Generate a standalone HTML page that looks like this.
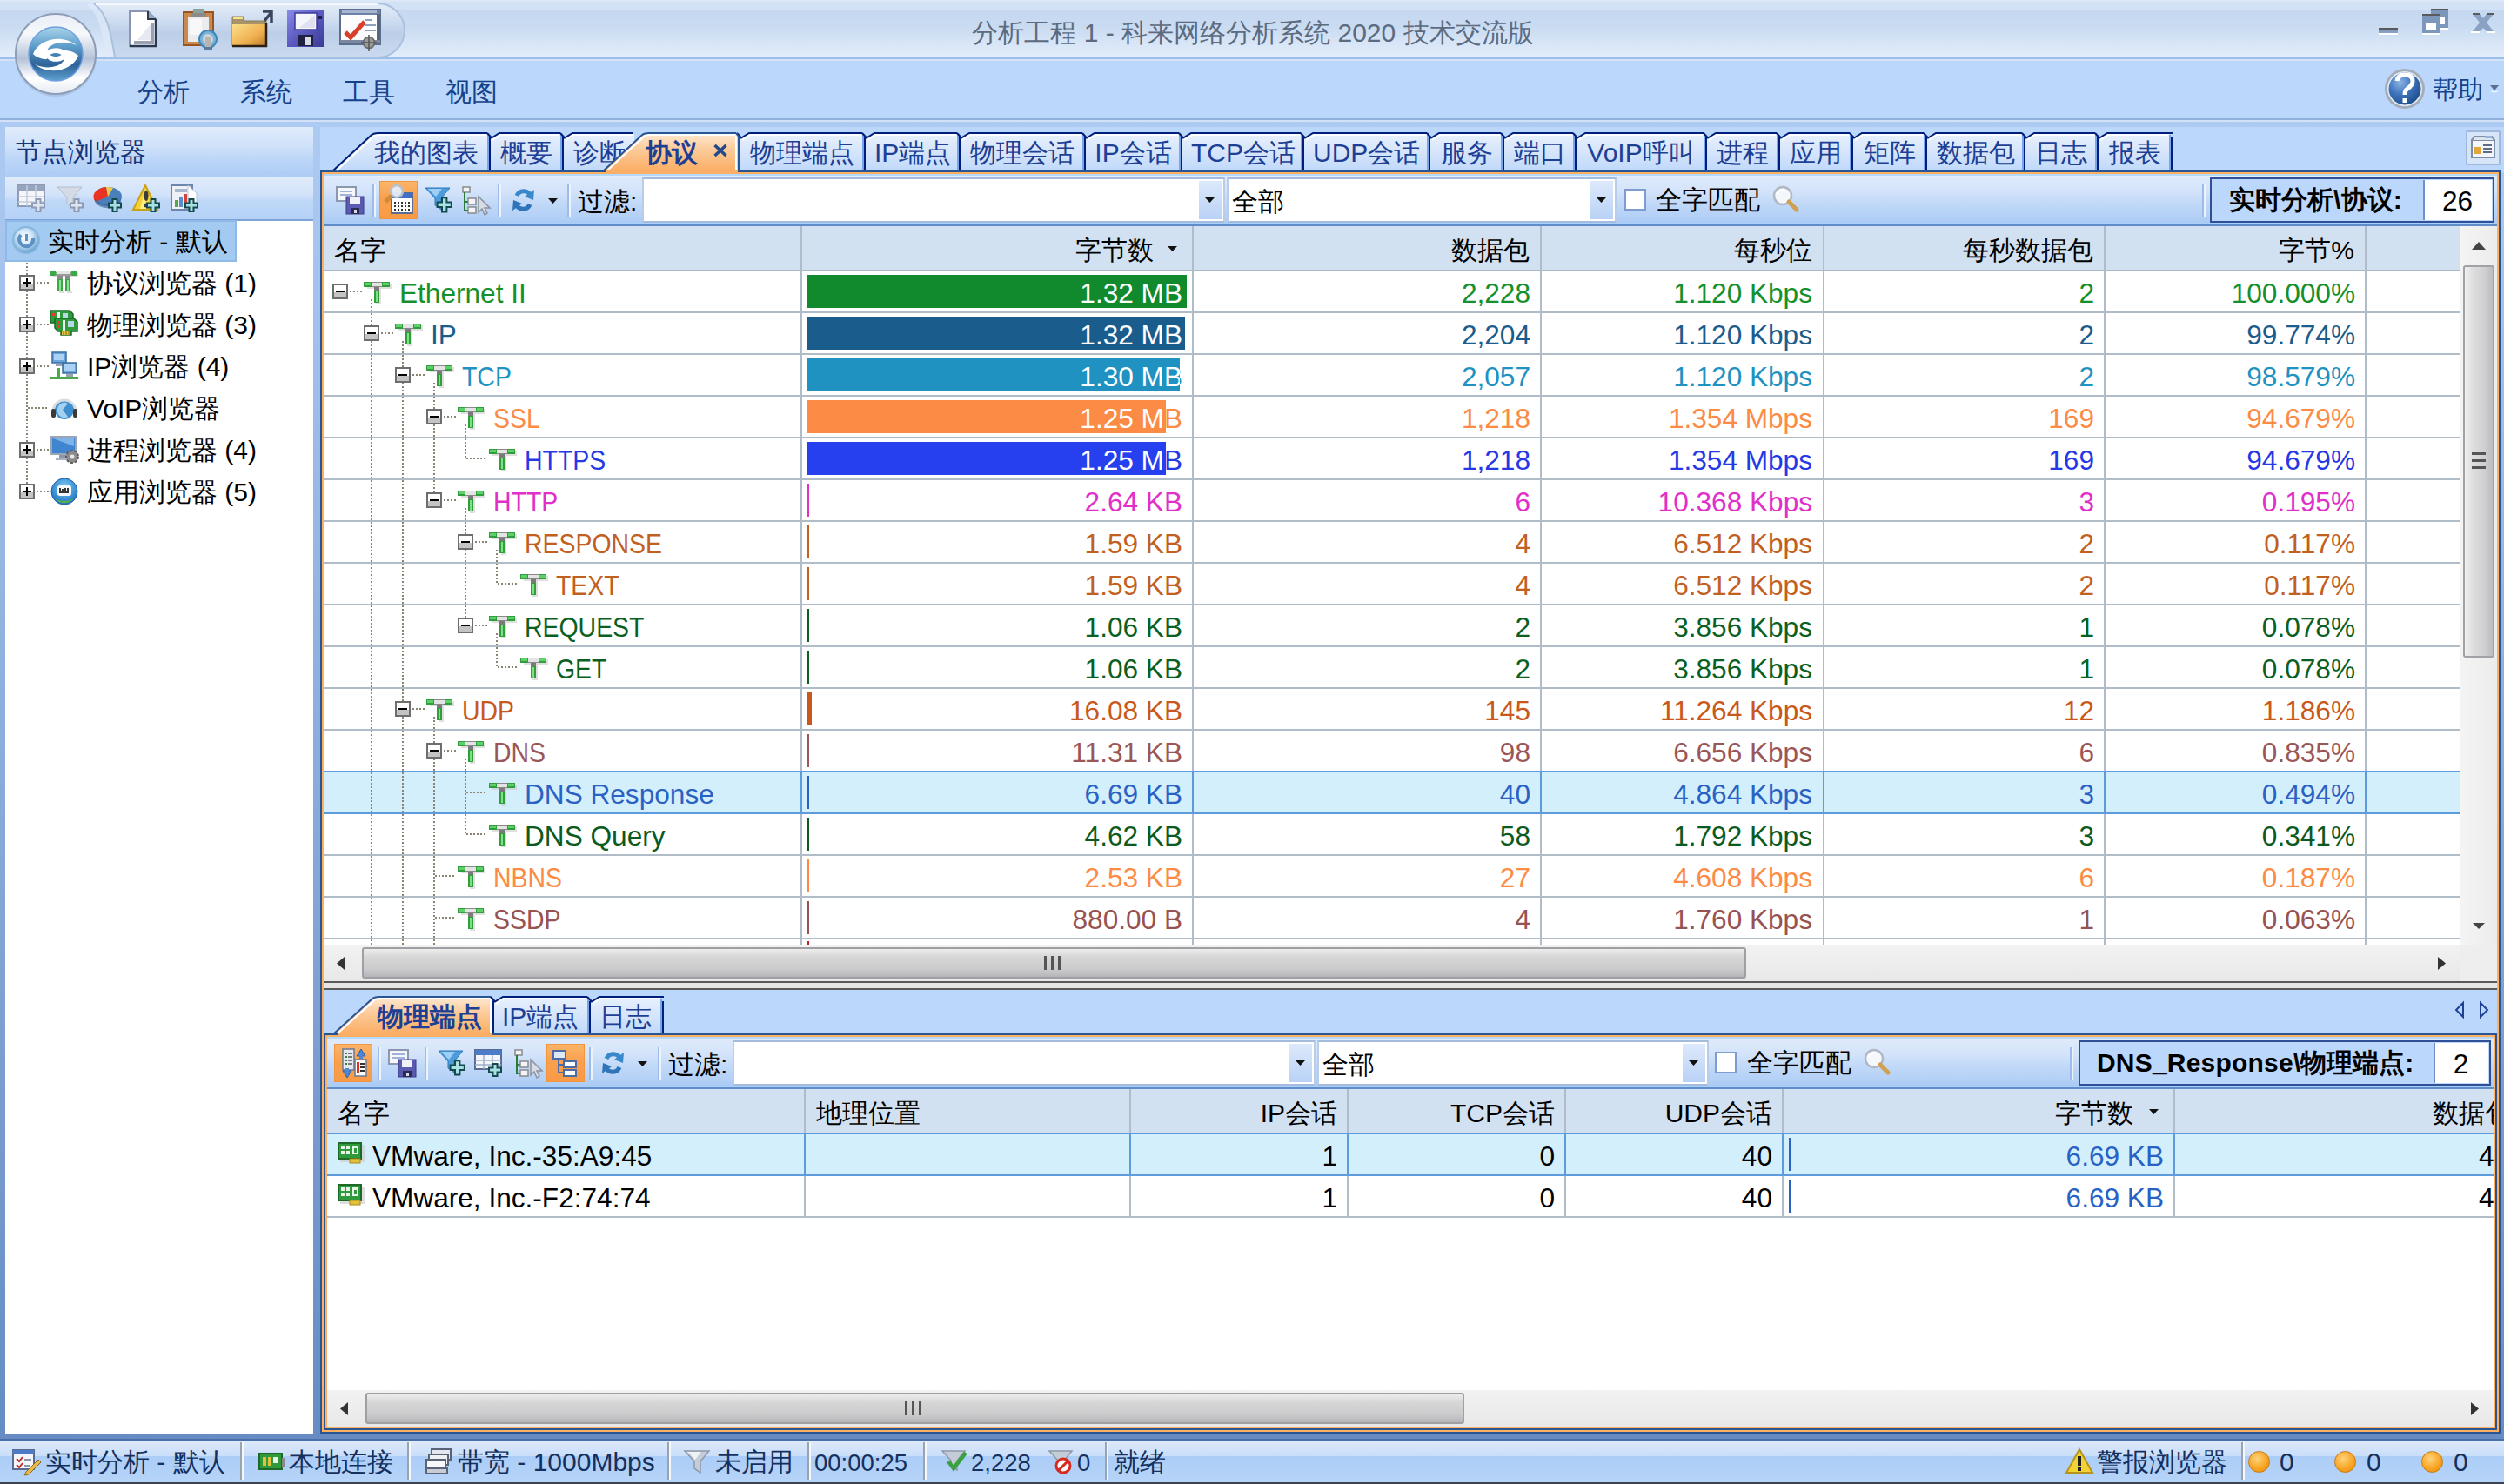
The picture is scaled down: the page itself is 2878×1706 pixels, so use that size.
<!DOCTYPE html>
<html lang="zh"><head><meta charset="utf-8"><title>科来网络分析系统</title><style>
html,body{margin:0;padding:0;}
body{width:2878px;height:1706px;overflow:hidden;background:#bbd7fb;font-family:"Liberation Sans",sans-serif;font-size:30px;color:#000;position:relative;}
div{position:absolute;box-sizing:border-box;}
.t{white-space:nowrap;overflow:visible;font-size:31.6px;}
.c{white-space:nowrap;overflow:visible;}
.k{display:inline-block;width:1em;text-align:center;}
.r{text-align:right;}
svg{position:absolute;overflow:visible;}
.hl{background:#b1bcc9;height:2px;}
.vl{background:#b1bcc9;width:2px;}
</style></head><body>
<div style="left:0px;top:0px;width:2878px;height:68px;background:linear-gradient(180deg,#dde8f6 0,#dde8f6 2px,#d3e1f4 2px,#d3e1f4 12px,#c5d8f0 12px,#c9dbf1 30px,#d6e4f6 48px,#e3eefb 66px,#9bbfea 66px,#9bbfea 68px);"></div>
<div style="left:0px;top:68px;width:2878px;height:68px;background:#bbd7fb;"></div>
<div style="left:0px;top:68px;width:2878px;height:2px;background:#d5e3f6;"></div>
<div style="left:0px;top:136px;width:2878px;height:2px;background:#91b1dc;"></div>
<div style="left:0px;top:138px;width:2878px;height:2px;background:#d2e1f5;"></div>
<div style="left:0px;top:140px;width:2878px;height:1516px;background:linear-gradient(180deg,#adcbf2 0,#668cc3 100%);"></div>
<svg style="left:100px;top:0px" width="380" height="70" viewBox="0 0 380 70"><defs><linearGradient id="qg" x1="0" y1="0" x2="0" y2="1"><stop offset="0" stop-color="#e4edf8"/><stop offset=".25" stop-color="#d3e0f2"/><stop offset=".5" stop-color="#c0d2ea"/><stop offset=".55" stop-color="#bccfe8"/><stop offset="1" stop-color="#cbdaef"/></linearGradient></defs><path d="M2 3 C 18 12, 22 40, 26 66" fill="none" stroke="#e0eaf8" stroke-width="8" opacity=".7"/><path d="M8 4 H334 A31 31 0 0 1 334 66 H32 C 28 40, 24 16, 8 4 Z" fill="url(#qg)" stroke="#a9c0de" stroke-width="2"/><path d="M10 5 H334" stroke="#f4f8fd" stroke-width="2"/></svg>
<div class="t" style="left:1090px;top:18px;width:700px;height:40px;line-height:40px;color:#5c6b80;font-size:30px;text-align:center;"><span class="k">分</span><span class="k">析</span><span class="k">工</span><span class="k">程</span> 1 - <span class="k">科</span><span class="k">来</span><span class="k">网</span><span class="k">络</span><span class="k">分</span><span class="k">析</span><span class="k">系</span><span class="k">统</span> 2020 <span class="k">技</span><span class="k">术</span><span class="k">交</span><span class="k">流</span><span class="k">版</span></div>
<div style="left:2734px;top:32px;width:22px;height:6px;background:linear-gradient(180deg,#5a5a5a 0,#5a5a5a 2px,#7d96bc 2px,#8ba3c6 100%);"></div>
<div style="left:2734px;top:38px;width:22px;height:2px;background:#fff;"></div>
<svg style="left:2784px;top:10px" width="32" height="32" viewBox="0 0 32 32"><rect x="10" y="0" width="20" height="22" fill="#7d96bc"/><rect x="10" y="0" width="20" height="2" fill="#5a5a5a"/><rect x="20" y="10" width="6" height="8" fill="#fff"/><rect x="10" y="22" width="20" height="2" fill="#fff"/><rect x="0" y="6" width="20" height="22" fill="#7d96bc"/><rect x="0" y="6" width="20" height="2" fill="#5a5a5a"/><rect x="4" y="16" width="12" height="8" fill="#fff"/><rect x="0" y="28" width="20" height="2" fill="#fff"/></svg>
<svg style="left:2839px;top:16px" width="30" height="24" viewBox="0 0 30 24"><path d="M3 20 H11 L15 16 L19 20 H27 L19 10 L27 0 H19 L15 5 L11 0 H3 L11 10 Z" fill="#8aa2c4"/><path d="M3 0 H11 M19 0 H27" stroke="#5a5a5a" stroke-width="2"/><path d="M1 21 H11 M19 21 H29" stroke="#fff" stroke-width="2"/></svg>
<svg style="left:14px;top:12px" width="100" height="100" viewBox="0 0 100 100"><defs><linearGradient id="og" x1="0" y1="0" x2="0" y2="1"><stop offset="0" stop-color="#e9eef6"/><stop offset=".25" stop-color="#f6f8fb"/><stop offset=".5" stop-color="#c2cde0"/><stop offset=".56" stop-color="#b4c2d8"/><stop offset=".8" stop-color="#ffffff"/><stop offset="1" stop-color="#e4eaf2"/></linearGradient><linearGradient id="ob" x1="0" y1="0" x2="0" y2="1"><stop offset="0" stop-color="#aad4ea"/><stop offset=".35" stop-color="#5f9fcc"/><stop offset=".7" stop-color="#2d6298"/><stop offset="1" stop-color="#5fa3cf"/></linearGradient></defs><circle cx="50" cy="52" r="47" fill="#8fa4c4" opacity=".35"/><circle cx="50" cy="50" r="46" fill="url(#og)" stroke="#8d9db6" stroke-width="2"/><circle cx="50" cy="50" r="31" fill="url(#ob)" stroke="#6fa0e0" stroke-width="1.5"/><path d="M24 50 C 30 34, 56 26, 74 40 C 62 34, 44 36, 40 46 C 50 40, 66 44, 60 54 C 54 46, 42 48, 40 56 C 34 56, 28 54, 24 50 Z" fill="#fff"/><path d="M76 52 C 70 68, 44 76, 26 62 C 38 68, 56 66, 60 56 C 50 62, 36 58, 40 48 C 46 56, 58 54, 60 46 C 66 46, 72 48, 76 52 Z" fill="#fff"/></svg>
<svg style="left:148px;top:12px" width="34" height="42" viewBox="0 0 34 42"><path d="M1 1 H22 L31 10 V41 H1 Z" fill="#fff" stroke="#8a96b4" stroke-width="2"/><path d="M22 1 V10 H31" fill="#9aa8bc" stroke="#2a3a50" stroke-width="2"/><path d="M31 10 V41 H1" stroke="#2a3a50" stroke-width="2.5" fill="none"/><path d="M6 37 H27 V14" stroke="#98a2b2" stroke-width="4" fill="none"/><path d="M10 34 L25 16 V34 Z" fill="#e6e8f2"/></svg>
<svg style="left:210px;top:10px" width="42" height="48" viewBox="0 0 42 48"><rect x="1" y="4" width="34" height="38" fill="#c98a50" stroke="#9a5420" stroke-width="2"/><rect x="6" y="10" width="24" height="28" fill="#ececee"/><rect x="8" y="12" width="14" height="18" fill="#f8f8f8"/><rect x="12" y="0" width="12" height="5" fill="#8aa09a"/><rect x="9" y="5" width="18" height="5" fill="#8a8a8a"/><circle cx="29" cy="35" r="10" fill="#7ab4d8" stroke="#3f87b8" stroke-width="2"/><circle cx="29" cy="35" r="6" fill="#cfd4da"/><rect x="26" y="32" width="6" height="12" fill="#b8b4b0"/><rect x="24" y="44" width="10" height="4" fill="#5a7a9a"/></svg>
<svg style="left:266px;top:12px" width="50" height="44" viewBox="0 0 50 44"><defs><linearGradient id="fg" x1="0" y1="0" x2="1" y2="1"><stop offset="0" stop-color="#fbe08a"/><stop offset=".6" stop-color="#f0b050"/><stop offset="1" stop-color="#b87828"/></linearGradient></defs><path d="M1 7 H14 V12 H40 V41 H1 Z" fill="#a89468" stroke="#8a7a58" stroke-width="1"/><rect x="2" y="7" width="11" height="3" fill="#f6e48a"/><path d="M1 16 H40 V41 H1 Z" fill="url(#fg)"/><path d="M40 14 V41 H1" stroke="#2a2018" stroke-width="2.5" fill="none"/><path d="M36 1 H46 V14 M46 2 L38 12" stroke="#3b4660" stroke-width="3.5" fill="none"/></svg>
<svg style="left:330px;top:12px" width="42" height="42" viewBox="0 0 42 42"><defs><linearGradient id="sg" x1="0" y1="0" x2="1" y2="1"><stop offset="0" stop-color="#8a8ae8"/><stop offset=".5" stop-color="#5a5ac0"/><stop offset="1" stop-color="#3a3a98"/></linearGradient></defs><rect x="0" y="0" width="42" height="42" fill="url(#sg)"/><rect x="9" y="3" width="25" height="19" fill="#f4f6fb" stroke="#3a3a98" stroke-width="1.5"/><path d="M14 20 L32 5 V20 Z" fill="#dfe2ee"/><rect x="12" y="28" width="18" height="13" fill="#202040"/><rect x="20" y="30" width="8" height="10" fill="#d8dce6"/><rect x="36" y="6" width="4" height="4" fill="#20204a"/></svg>
<svg style="left:390px;top:10px" width="50" height="48" viewBox="0 0 50 48"><rect x="1" y="1" width="46" height="40" fill="#fdfdff" stroke="#5b6f8c" stroke-width="2"/><rect x="1" y="1" width="46" height="6" fill="#6d80a8"/><rect x="3" y="2" width="40" height="3" fill="#a8b4d0"/><path d="M45 6 V40" stroke="#56667c" stroke-width="4"/><path d="M1 38 H47" stroke="#7a88a0" stroke-width="4"/><path d="M7 27 L13 33 L29 15" stroke="#d9402c" stroke-width="5" fill="none"/><path d="M30 13 H38 M30 19 H42 M30 25 H42" stroke="#8ea0c0" stroke-width="2"/><circle cx="34" cy="39" r="6.5" fill="#9a9a9a" stroke="#666" stroke-width="1.5"/><path d="M34 30 V49 M25 39 H43" stroke="#555" stroke-width="1.5"/></svg>
<div class="t" style="left:158px;top:86px;width:60px;height:40px;line-height:40px;color:#15428b;font-size:30px;text-align:center;"><span class="k">分</span><span class="k">析</span></div>
<div class="t" style="left:276px;top:86px;width:60px;height:40px;line-height:40px;color:#15428b;font-size:30px;text-align:center;"><span class="k">系</span><span class="k">统</span></div>
<div class="t" style="left:394px;top:86px;width:60px;height:40px;line-height:40px;color:#15428b;font-size:30px;text-align:center;"><span class="k">工</span><span class="k">具</span></div>
<div class="t" style="left:512px;top:86px;width:60px;height:40px;line-height:40px;color:#15428b;font-size:30px;text-align:center;"><span class="k">视</span><span class="k">图</span></div>
<svg style="left:2740px;top:78px" width="48" height="48" viewBox="0 0 48 48"><defs><radialGradient id="hg" cx="35%" cy="30%" r="75%"><stop offset="0" stop-color="#8db4e6"/><stop offset=".5" stop-color="#3f73bc"/><stop offset="1" stop-color="#1d4f8c"/></radialGradient></defs><circle cx="24" cy="24" r="23" fill="#a4aeba"/><circle cx="24" cy="24" r="20" fill="#e4ecf6"/><circle cx="24" cy="24" r="18.5" fill="url(#hg)"/><path d="M15 15 Q16 8 24 8 Q33 8 33 15 Q33 20 27 24 Q24 26 24 31" fill="none" stroke="#fff" stroke-width="5"/><rect x="21.5" y="35" width="5" height="5" fill="#fff"/></svg>
<div class="t" style="left:2796px;top:83px;width:62px;height:40px;line-height:40px;color:#15428b;font-size:30px;font-size:29px;"><span class="k">帮</span><span class="k">助</span></div>
<svg style="left:2862px;top:98px" width="12" height="8" viewBox="0 0 12 8"><path d="M0 0 H10 L5 6 Z" fill="#5a6e90"/><path d="M1 7 L5 8 L9 7" stroke="#fff" stroke-width="1" fill="none"/></svg>
<div style="left:6px;top:146px;width:354px;height:57px;background:linear-gradient(180deg,#e0ecfb 0,#cfe1f9 40%,#b9d4f7 70%,#adcdf5 100%);"></div>
<div class="t" style="left:18px;top:155px;width:160px;height:40px;line-height:40px;color:#15357a;font-size:30px;"><span class="k">节</span><span class="k">点</span><span class="k">浏</span><span class="k">览</span><span class="k">器</span></div>
<div style="left:6px;top:204px;width:354px;height:48px;background:linear-gradient(180deg,#e1ecfb 0,#cfe1f9 45%,#bfd8f7 55%,#b4d1f6 100%);"></div>
<div style="left:6px;top:252px;width:354px;height:2px;background:#7da2da;"></div>
<div style="left:6px;top:254px;width:354px;height:1394px;background:#fff;"></div>
<div style="left:6px;top:253px;width:266px;height:48px;background:#a3caf0;border:2px solid #8fb9e8;"></div>
<svg style="left:20px;top:212px" width="36" height="36" viewBox="0 0 36 36"><rect x="1" y="1" width="30" height="24" fill="#f4f6fa" stroke="#8e9bb4" stroke-width="2"/><rect x="1" y="1" width="30" height="7" fill="#97a4bd"/><path d="M11 1 V25 M21 1 V25 M1 14 H31 M1 20 H31" stroke="#c4ccd9" stroke-width="1.5"/><path d="M21.5 17 H26.5 V21.5 H31 V26.5 H26.5 V31 H21.5 V26.5 H17 V21.5 H21.5 Z" fill="#dfe4ee" stroke="#8e9bb4" stroke-width="2"/></svg>
<svg style="left:64px;top:212px" width="36" height="36" viewBox="0 0 36 36"><path d="M2 3 H30 L20 15 V27 L13 22 V15 Z" fill="#d5dbe6" stroke="#b4bccb" stroke-width="1"/><path d="M21.5 17 H26.5 V21.5 H31 V26.5 H26.5 V31 H21.5 V26.5 H17 V21.5 H21.5 Z" fill="#dfe4ee" stroke="#8e9bb4" stroke-width="2"/></svg>
<svg style="left:108px;top:212px" width="36" height="36" viewBox="0 0 36 36"><ellipse cx="16" cy="14" rx="16" ry="11" fill="#4a7fbb"/><path d="M16 14 L2 20 A16 11 0 0 1 14 3 Z" fill="#ea3323"/><path d="M16 14 L14 3 A16 11 0 0 1 22 4 Z" fill="#f6c945"/><path d="M1 16 A16 11 0 0 0 31 16 V20 A16 11 0 0 1 1 20 Z" fill="#2e5d95" opacity=".6"/><path d="M21.5 17 H26.5 V21.5 H31 V26.5 H26.5 V31 H21.5 V26.5 H17 V21.5 H21.5 Z" fill="#a9e0e4" stroke="#14494d" stroke-width="2"/></svg>
<svg style="left:152px;top:212px" width="36" height="36" viewBox="0 0 36 36"><path d="M15 1 L29 29 H1 Z" fill="#f3d236" stroke="#c9a21a" stroke-width="2"/><path d="M9 28 L15 5 L16 28 Z" fill="#fff6a8" opacity=".7"/><ellipse cx="16" cy="13" rx="2.5" ry="6" fill="#3b3b3b"/><circle cx="16" cy="24" r="2.5" fill="#3b3b3b"/><path d="M21.5 17 H26.5 V21.5 H31 V26.5 H26.5 V31 H21.5 V26.5 H17 V21.5 H21.5 Z" fill="#a9e0e4" stroke="#14494d" stroke-width="2"/></svg>
<svg style="left:196px;top:212px" width="36" height="36" viewBox="0 0 36 36"><rect x="1" y="1" width="24" height="28" fill="#eef2f7" stroke="#6d86ad" stroke-width="2"/><path d="M20 1 L30 10 V24 H20 Z" fill="#fff" stroke="#b8c4d6"/><rect x="5" y="5" width="14" height="4" fill="#a9b7cf"/><rect x="5" y="18" width="4" height="8" fill="#58a455"/><rect x="10" y="15" width="4" height="11" fill="#5b8fc9"/><rect x="15" y="11" width="4" height="15" fill="#d6403a"/><path d="M21.5 17 H26.5 V21.5 H31 V26.5 H26.5 V31 H21.5 V26.5 H17 V21.5 H21.5 Z" fill="#a9e0e4" stroke="#14494d" stroke-width="2"/></svg>
<svg style="left:14px;top:260px" width="34" height="34" viewBox="0 0 34 34"><defs><radialGradient id="rg" cx="45%" cy="40%" r="60%"><stop offset="0" stop-color="#ffffff"/><stop offset=".5" stop-color="#cfe6f6"/><stop offset="1" stop-color="#5f9ed0"/></radialGradient></defs><circle cx="16" cy="16" r="15" fill="url(#rg)" stroke="#86b5dc" stroke-width="2"/><path d="M10 10 A8 8 0 1 0 24 14" fill="none" stroke="#5c8fc2" stroke-width="4"/><rect x="15" y="9" width="3" height="8" fill="#5c8fc2"/></svg>
<div class="t" style="left:55px;top:256px;width:210px;height:44px;line-height:44px;font-size:30px;"><span class="k">实</span><span class="k">时</span><span class="k">分</span><span class="k">析</span> - <span class="k">默</span><span class="k">认</span></div>
<div style="left:30px;top:302px;width:2px;height:264px;background:repeating-linear-gradient(180deg,#8c8472 0 2px,transparent 2px 4px);"></div>
<svg style="left:22px;top:316px" width="18" height="18" viewBox="0 0 18 18"><rect x="1" y="1" width="16" height="16" fill="#fff" stroke="#6e6e6e" stroke-width="2"/><rect x="2" y="10" width="14" height="6" fill="#c4c4c4"/><rect x="4" y="8" width="10" height="2" fill="#000"/><rect x="8" y="4" width="2" height="10" fill="#000"/></svg>
<div style="left:42px;top:324px;width:14px;height:2px;background:repeating-linear-gradient(90deg,#8c8472 0 2px,transparent 2px 4px);"></div>
<div class="t" style="left:100px;top:302px;width:220px;height:48px;line-height:48px;font-size:30px;"><span class="k">协</span><span class="k">议</span><span class="k">浏</span><span class="k">览</span><span class="k">器</span> (1)</div>
<svg style="left:58px;top:309px" width="34" height="32" viewBox="0 0 34 32"><rect x="2" y="4" width="30" height="6" fill="#c8c8c8" opacity=".6"/><rect x="0" y="2" width="30" height="6" fill="#9a9a9a"/><rect x="6" y="3" width="18" height="3" fill="#e4e4e4"/><path d="M0 2 H5 L7 5 L5 8 H0 Z M30 2 H25 L23 5 L25 8 H30 Z" fill="#3aa845"/><rect x="8" y="8" width="6" height="4" fill="#8a8a8a"/><rect x="17" y="8" width="6" height="4" fill="#8a8a8a"/><rect x="8" y="12" width="6" height="14" fill="#3aa845"/><rect x="10" y="13" width="2" height="12" fill="#8fe096"/><rect x="17" y="12" width="6" height="14" fill="#3aa845"/><rect x="19" y="13" width="2" height="12" fill="#8fe096"/><rect x="10" y="26" width="6" height="2" fill="#c8c8c8" opacity=".6"/><rect x="19" y="26" width="6" height="2" fill="#c8c8c8" opacity=".6"/></svg>
<svg style="left:22px;top:364px" width="18" height="18" viewBox="0 0 18 18"><rect x="1" y="1" width="16" height="16" fill="#fff" stroke="#6e6e6e" stroke-width="2"/><rect x="2" y="10" width="14" height="6" fill="#c4c4c4"/><rect x="4" y="8" width="10" height="2" fill="#000"/><rect x="8" y="4" width="2" height="10" fill="#000"/></svg>
<div style="left:42px;top:372px;width:14px;height:2px;background:repeating-linear-gradient(90deg,#8c8472 0 2px,transparent 2px 4px);"></div>
<div class="t" style="left:100px;top:350px;width:220px;height:48px;line-height:48px;font-size:30px;"><span class="k">物</span><span class="k">理</span><span class="k">浏</span><span class="k">览</span><span class="k">器</span> (3)</div>
<svg style="left:58px;top:357px" width="34" height="32" viewBox="0 0 34 32"><path d="M0 0 H22 L26 4 V14 H0 Z" fill="#2f9a3c" stroke="#1b6a27" stroke-width="1.5"/><rect x="2" y="3" width="3" height="3" fill="#e63a2a"/><rect x="8" y="2" width="3" height="8" fill="#e8f4e8"/><rect x="14" y="3" width="6" height="5" fill="#b8d8e8"/><path d="M5 9 H27 L31 13 V24 H24 V28 H12 V24 H9 L5 20 Z" fill="#2f9a3c" stroke="#1b6a27" stroke-width="1.5"/><rect x="8" y="12" width="3" height="3" fill="#e63a2a"/><rect x="8" y="17" width="3" height="3" fill="#e63a2a"/><rect x="14" y="11" width="3" height="12" fill="#e8f4e8"/><rect x="20" y="12" width="7" height="7" fill="#b8d8e8"/><rect x="13" y="24" width="10" height="4" fill="#e2c23a"/><path d="M15 24 V28 M18 24 V28 M21 24 V28" stroke="#8a6a10" stroke-width="1"/></svg>
<svg style="left:22px;top:412px" width="18" height="18" viewBox="0 0 18 18"><rect x="1" y="1" width="16" height="16" fill="#fff" stroke="#6e6e6e" stroke-width="2"/><rect x="2" y="10" width="14" height="6" fill="#c4c4c4"/><rect x="4" y="8" width="10" height="2" fill="#000"/><rect x="8" y="4" width="2" height="10" fill="#000"/></svg>
<div style="left:42px;top:420px;width:14px;height:2px;background:repeating-linear-gradient(90deg,#8c8472 0 2px,transparent 2px 4px);"></div>
<div class="t" style="left:100px;top:398px;width:220px;height:48px;line-height:48px;font-size:30px;">IP<span class="k">浏</span><span class="k">览</span><span class="k">器</span> (4)</div>
<svg style="left:58px;top:405px" width="34" height="32" viewBox="0 0 34 32"><rect x="2" y="0" width="16" height="12" fill="#6aa6dd" stroke="#3c6ea4" stroke-width="1.5"/><rect x="4" y="2" width="12" height="7" fill="#a9d2f4"/><rect x="6" y="13" width="8" height="3" fill="#98a4b4"/><rect x="14" y="12" width="16" height="12" fill="#6aa6dd" stroke="#3c6ea4" stroke-width="1.5"/><rect x="16" y="14" width="12" height="7" fill="#a9d2f4"/><rect x="18" y="25" width="8" height="3" fill="#98a4b4"/><rect x="0" y="28" width="32" height="3" fill="#4aa84f"/><rect x="8" y="18" width="3" height="10" fill="#4aa84f"/></svg>
<div style="left:32px;top:468px;width:24px;height:2px;background:repeating-linear-gradient(90deg,#8c8472 0 2px,transparent 2px 4px);"></div>
<div class="t" style="left:100px;top:446px;width:220px;height:48px;line-height:48px;font-size:30px;">VoIP<span class="k">浏</span><span class="k">览</span><span class="k">器</span></div>
<svg style="left:58px;top:453px" width="34" height="32" viewBox="0 0 34 32"><circle cx="16" cy="18" r="11" fill="#3d8fd0"/><path d="M8 18 A8 8 0 0 1 20 11 L14 18 L20 26 A8 8 0 0 1 8 18" fill="#bfe1f8" opacity=".8"/><path d="M3 20 A13 13 0 0 1 29 20" fill="none" stroke="#d8dde4" stroke-width="3"/><rect x="1" y="17" width="5" height="10" rx="2" fill="#3a3a3a"/><rect x="26" y="17" width="5" height="10" rx="2" fill="#3a3a3a"/></svg>
<svg style="left:22px;top:508px" width="18" height="18" viewBox="0 0 18 18"><rect x="1" y="1" width="16" height="16" fill="#fff" stroke="#6e6e6e" stroke-width="2"/><rect x="2" y="10" width="14" height="6" fill="#c4c4c4"/><rect x="4" y="8" width="10" height="2" fill="#000"/><rect x="8" y="4" width="2" height="10" fill="#000"/></svg>
<div style="left:42px;top:516px;width:14px;height:2px;background:repeating-linear-gradient(90deg,#8c8472 0 2px,transparent 2px 4px);"></div>
<div class="t" style="left:100px;top:494px;width:220px;height:48px;line-height:48px;font-size:30px;"><span class="k">进</span><span class="k">程</span><span class="k">浏</span><span class="k">览</span><span class="k">器</span> (4)</div>
<svg style="left:58px;top:501px" width="34" height="32" viewBox="0 0 34 32"><rect x="1" y="1" width="28" height="20" fill="#3f85d0" stroke="#9aa6b6" stroke-width="2"/><path d="M3 3 H27 V12 Z" fill="#7cb4ea"/><rect x="10" y="22" width="10" height="3" fill="#8c98a8"/><rect x="6" y="25" width="18" height="3" fill="#a8b2c0"/><circle cx="25" cy="24" r="7" fill="#8c8c8c" stroke="#5e5e5e" stroke-width="2" stroke-dasharray="3 2"/><circle cx="25" cy="24" r="2.5" fill="#e8e8e8"/></svg>
<svg style="left:22px;top:556px" width="18" height="18" viewBox="0 0 18 18"><rect x="1" y="1" width="16" height="16" fill="#fff" stroke="#6e6e6e" stroke-width="2"/><rect x="2" y="10" width="14" height="6" fill="#c4c4c4"/><rect x="4" y="8" width="10" height="2" fill="#000"/><rect x="8" y="4" width="2" height="10" fill="#000"/></svg>
<div style="left:42px;top:564px;width:14px;height:2px;background:repeating-linear-gradient(90deg,#8c8472 0 2px,transparent 2px 4px);"></div>
<div class="t" style="left:100px;top:542px;width:220px;height:48px;line-height:48px;font-size:30px;"><span class="k">应</span><span class="k">用</span><span class="k">浏</span><span class="k">览</span><span class="k">器</span> (5)</div>
<svg style="left:58px;top:549px" width="34" height="32" viewBox="0 0 34 32"><defs><radialGradient id="ag" cx="50%" cy="35%" r="65%"><stop offset="0" stop-color="#7fd0f6"/><stop offset="1" stop-color="#1b6fc0"/></radialGradient></defs><circle cx="16" cy="16" r="15" fill="url(#ag)" stroke="#1f5fa6" stroke-width="1"/><path d="M5 24 A14 14 0 0 0 27 24 C 20 28, 12 28, 5 24 Z" fill="#58b04a"/><rect x="8" y="9" width="16" height="12" rx="3" fill="#f4f8fc"/><path d="M11 12 V17 H14 V13 M14 17 H17 V12 M17 17 H20 V12" stroke="#333" stroke-width="2" fill="none"/></svg>
<div style="left:368px;top:146px;width:2510px;height:52px;background:#bbd7fb;"></div>
<div style="left:368px;top:196px;width:2506px;height:1452px;background:#2a5594;"></div>
<div style="left:370px;top:198px;width:2502px;height:1448px;background:#fdb060;"></div>
<div style="left:372px;top:200px;width:2498px;height:1444px;background:#fff;"></div>
<svg width="0" height="0" style="left:0;top:0"><defs><linearGradient id="tg" x1="0" y1="0" x2="0" y2="1"><stop offset="0" stop-color="#e8f1fd"/><stop offset=".5" stop-color="#d6e5fb"/><stop offset="1" stop-color="#c0d9fa"/></linearGradient><linearGradient id="tga" x1="0" y1="0" x2="0" y2="1"><stop offset="0" stop-color="#fee9d3"/><stop offset=".45" stop-color="#fcca98"/><stop offset="1" stop-color="#fbae65"/></linearGradient></defs></svg>
<svg style="left:379px;top:152px" width="193" height="44" viewBox="0 0 193 44"><path d="M4 44 L47 4 Q50 1 56 1 H180 L182 3 V44 Z" fill="url(#tg)"/><path d="M8 44 L49 6 Q51 3 56 3 H180" fill="none" stroke="#fff" stroke-width="2"/><path d="M182 3 V44" stroke="#79a5ea" stroke-width="2"/><path d="M4 44 L47 4 Q50 1 56 1 H181" fill="none" stroke="#001e7c" stroke-width="2"/></svg>
<div class="t" style="left:430px;top:155px;width:120px;height:42px;line-height:42px;color:#1d3f94;font-size:30px;text-align:center;"><span class="k">我</span><span class="k">的</span><span class="k">图</span><span class="k">表</span></div>
<svg style="left:512px;top:152px" width="144" height="44" viewBox="0 0 144 44"><path d="M52 44 V8 L54 6 L62 1 H131 L133 3 V44 Z" fill="url(#tg)"/><path d="M54 9 L63 3 H131" fill="none" stroke="#fff" stroke-width="2"/><path d="M133 3 V44" stroke="#79a5ea" stroke-width="2"/><path d="M48 1 L53 6.5 L62 1 H132 M51 6 V44" fill="none" stroke="#001e7c" stroke-width="2"/></svg>
<div class="t" style="left:574px;top:155px;width:62px;height:42px;line-height:42px;color:#1d3f94;font-size:30px;text-align:center;"><span class="k">概</span><span class="k">要</span></div>
<svg style="left:596px;top:152px" width="144" height="44" viewBox="0 0 144 44"><path d="M52 44 V8 L54 6 L62 1 H131 L133 3 V44 Z" fill="url(#tg)"/><path d="M54 9 L63 3 H131" fill="none" stroke="#fff" stroke-width="2"/><path d="M48 1 L53 6.5 L62 1 H132 M51 6 V44" fill="none" stroke="#001e7c" stroke-width="2"/></svg>
<div class="t" style="left:658px;top:155px;width:62px;height:42px;line-height:42px;color:#1d3f94;font-size:30px;text-align:center;"><span class="k">诊</span><span class="k">断</span></div>
<svg style="left:799px;top:152px" width="204" height="44" viewBox="0 0 204 44"><path d="M52 44 V8 L54 6 L62 1 H191 L193 3 V44 Z" fill="url(#tg)"/><path d="M54 9 L63 3 H191" fill="none" stroke="#fff" stroke-width="2"/><path d="M193 3 V44" stroke="#79a5ea" stroke-width="2"/><path d="M48 1 L53 6.5 L62 1 H192 M51 6 V44" fill="none" stroke="#001e7c" stroke-width="2"/></svg>
<div class="t" style="left:861px;top:155px;width:122px;height:42px;line-height:42px;color:#1d3f94;font-size:30px;text-align:center;"><span class="k">物</span><span class="k">理</span><span class="k">端</span><span class="k">点</span></div>
<svg style="left:943px;top:152px" width="169" height="44" viewBox="0 0 169 44"><path d="M52 44 V8 L54 6 L62 1 H156 L158 3 V44 Z" fill="url(#tg)"/><path d="M54 9 L63 3 H156" fill="none" stroke="#fff" stroke-width="2"/><path d="M158 3 V44" stroke="#79a5ea" stroke-width="2"/><path d="M48 1 L53 6.5 L62 1 H157 M51 6 V44" fill="none" stroke="#001e7c" stroke-width="2"/></svg>
<div class="t" style="left:1005px;top:155px;width:87px;height:42px;line-height:42px;color:#1d3f94;font-size:30px;text-align:center;">IP<span class="k">端</span><span class="k">点</span></div>
<svg style="left:1052px;top:152px" width="204" height="44" viewBox="0 0 204 44"><path d="M52 44 V8 L54 6 L62 1 H191 L193 3 V44 Z" fill="url(#tg)"/><path d="M54 9 L63 3 H191" fill="none" stroke="#fff" stroke-width="2"/><path d="M193 3 V44" stroke="#79a5ea" stroke-width="2"/><path d="M48 1 L53 6.5 L62 1 H192 M51 6 V44" fill="none" stroke="#001e7c" stroke-width="2"/></svg>
<div class="t" style="left:1114px;top:155px;width:122px;height:42px;line-height:42px;color:#1d3f94;font-size:30px;text-align:center;"><span class="k">物</span><span class="k">理</span><span class="k">会</span><span class="k">话</span></div>
<svg style="left:1196px;top:152px" width="171" height="44" viewBox="0 0 171 44"><path d="M52 44 V8 L54 6 L62 1 H158 L160 3 V44 Z" fill="url(#tg)"/><path d="M54 9 L63 3 H158" fill="none" stroke="#fff" stroke-width="2"/><path d="M160 3 V44" stroke="#79a5ea" stroke-width="2"/><path d="M48 1 L53 6.5 L62 1 H159 M51 6 V44" fill="none" stroke="#001e7c" stroke-width="2"/></svg>
<div class="t" style="left:1258px;top:155px;width:89px;height:42px;line-height:42px;color:#1d3f94;font-size:30px;text-align:center;">IP<span class="k">会</span><span class="k">话</span></div>
<svg style="left:1307px;top:152px" width="200" height="44" viewBox="0 0 200 44"><path d="M52 44 V8 L54 6 L62 1 H187 L189 3 V44 Z" fill="url(#tg)"/><path d="M54 9 L63 3 H187" fill="none" stroke="#fff" stroke-width="2"/><path d="M189 3 V44" stroke="#79a5ea" stroke-width="2"/><path d="M48 1 L53 6.5 L62 1 H188 M51 6 V44" fill="none" stroke="#001e7c" stroke-width="2"/></svg>
<div class="t" style="left:1369px;top:155px;width:118px;height:42px;line-height:42px;color:#1d3f94;font-size:30px;text-align:center;">TCP<span class="k">会</span><span class="k">话</span></div>
<svg style="left:1447px;top:152px" width="205" height="44" viewBox="0 0 205 44"><path d="M52 44 V8 L54 6 L62 1 H192 L194 3 V44 Z" fill="url(#tg)"/><path d="M54 9 L63 3 H192" fill="none" stroke="#fff" stroke-width="2"/><path d="M194 3 V44" stroke="#79a5ea" stroke-width="2"/><path d="M48 1 L53 6.5 L62 1 H193 M51 6 V44" fill="none" stroke="#001e7c" stroke-width="2"/></svg>
<div class="t" style="left:1509px;top:155px;width:123px;height:42px;line-height:42px;color:#1d3f94;font-size:30px;text-align:center;">UDP<span class="k">会</span><span class="k">话</span></div>
<svg style="left:1592px;top:152px" width="145" height="44" viewBox="0 0 145 44"><path d="M52 44 V8 L54 6 L62 1 H132 L134 3 V44 Z" fill="url(#tg)"/><path d="M54 9 L63 3 H132" fill="none" stroke="#fff" stroke-width="2"/><path d="M134 3 V44" stroke="#79a5ea" stroke-width="2"/><path d="M48 1 L53 6.5 L62 1 H133 M51 6 V44" fill="none" stroke="#001e7c" stroke-width="2"/></svg>
<div class="t" style="left:1654px;top:155px;width:63px;height:42px;line-height:42px;color:#1d3f94;font-size:30px;text-align:center;"><span class="k">服</span><span class="k">务</span></div>
<svg style="left:1677px;top:152px" width="143" height="44" viewBox="0 0 143 44"><path d="M52 44 V8 L54 6 L62 1 H130 L132 3 V44 Z" fill="url(#tg)"/><path d="M54 9 L63 3 H130" fill="none" stroke="#fff" stroke-width="2"/><path d="M132 3 V44" stroke="#79a5ea" stroke-width="2"/><path d="M48 1 L53 6.5 L62 1 H131 M51 6 V44" fill="none" stroke="#001e7c" stroke-width="2"/></svg>
<div class="t" style="left:1739px;top:155px;width:61px;height:42px;line-height:42px;color:#1d3f94;font-size:30px;text-align:center;"><span class="k">端</span><span class="k">口</span></div>
<svg style="left:1760px;top:152px" width="210" height="44" viewBox="0 0 210 44"><path d="M52 44 V8 L54 6 L62 1 H197 L199 3 V44 Z" fill="url(#tg)"/><path d="M54 9 L63 3 H197" fill="none" stroke="#fff" stroke-width="2"/><path d="M199 3 V44" stroke="#79a5ea" stroke-width="2"/><path d="M48 1 L53 6.5 L62 1 H198 M51 6 V44" fill="none" stroke="#001e7c" stroke-width="2"/></svg>
<div class="t" style="left:1822px;top:155px;width:128px;height:42px;line-height:42px;color:#1d3f94;font-size:30px;text-align:center;">VoIP<span class="k">呼</span><span class="k">叫</span></div>
<svg style="left:1910px;top:152px" width="144" height="44" viewBox="0 0 144 44"><path d="M52 44 V8 L54 6 L62 1 H131 L133 3 V44 Z" fill="url(#tg)"/><path d="M54 9 L63 3 H131" fill="none" stroke="#fff" stroke-width="2"/><path d="M133 3 V44" stroke="#79a5ea" stroke-width="2"/><path d="M48 1 L53 6.5 L62 1 H132 M51 6 V44" fill="none" stroke="#001e7c" stroke-width="2"/></svg>
<div class="t" style="left:1972px;top:155px;width:62px;height:42px;line-height:42px;color:#1d3f94;font-size:30px;text-align:center;"><span class="k">进</span><span class="k">程</span></div>
<svg style="left:1994px;top:152px" width="144" height="44" viewBox="0 0 144 44"><path d="M52 44 V8 L54 6 L62 1 H131 L133 3 V44 Z" fill="url(#tg)"/><path d="M54 9 L63 3 H131" fill="none" stroke="#fff" stroke-width="2"/><path d="M133 3 V44" stroke="#79a5ea" stroke-width="2"/><path d="M48 1 L53 6.5 L62 1 H132 M51 6 V44" fill="none" stroke="#001e7c" stroke-width="2"/></svg>
<div class="t" style="left:2056px;top:155px;width:62px;height:42px;line-height:42px;color:#1d3f94;font-size:30px;text-align:center;"><span class="k">应</span><span class="k">用</span></div>
<svg style="left:2078px;top:152px" width="145" height="44" viewBox="0 0 145 44"><path d="M52 44 V8 L54 6 L62 1 H132 L134 3 V44 Z" fill="url(#tg)"/><path d="M54 9 L63 3 H132" fill="none" stroke="#fff" stroke-width="2"/><path d="M134 3 V44" stroke="#79a5ea" stroke-width="2"/><path d="M48 1 L53 6.5 L62 1 H133 M51 6 V44" fill="none" stroke="#001e7c" stroke-width="2"/></svg>
<div class="t" style="left:2140px;top:155px;width:63px;height:42px;line-height:42px;color:#1d3f94;font-size:30px;text-align:center;"><span class="k">矩</span><span class="k">阵</span></div>
<svg style="left:2163px;top:152px" width="173" height="44" viewBox="0 0 173 44"><path d="M52 44 V8 L54 6 L62 1 H160 L162 3 V44 Z" fill="url(#tg)"/><path d="M54 9 L63 3 H160" fill="none" stroke="#fff" stroke-width="2"/><path d="M162 3 V44" stroke="#79a5ea" stroke-width="2"/><path d="M48 1 L53 6.5 L62 1 H161 M51 6 V44" fill="none" stroke="#001e7c" stroke-width="2"/></svg>
<div class="t" style="left:2225px;top:155px;width:91px;height:42px;line-height:42px;color:#1d3f94;font-size:30px;text-align:center;"><span class="k">数</span><span class="k">据</span><span class="k">包</span></div>
<svg style="left:2276px;top:152px" width="144" height="44" viewBox="0 0 144 44"><path d="M52 44 V8 L54 6 L62 1 H131 L133 3 V44 Z" fill="url(#tg)"/><path d="M54 9 L63 3 H131" fill="none" stroke="#fff" stroke-width="2"/><path d="M133 3 V44" stroke="#79a5ea" stroke-width="2"/><path d="M48 1 L53 6.5 L62 1 H132 M51 6 V44" fill="none" stroke="#001e7c" stroke-width="2"/></svg>
<div class="t" style="left:2338px;top:155px;width:62px;height:42px;line-height:42px;color:#1d3f94;font-size:30px;text-align:center;"><span class="k">日</span><span class="k">志</span></div>
<svg style="left:2360px;top:152px" width="145" height="44" viewBox="0 0 145 44"><path d="M52 44 V8 L54 6 L62 1 H132 L134 3 V44 Z" fill="url(#tg)"/><path d="M54 9 L63 3 H132" fill="none" stroke="#fff" stroke-width="2"/><path d="M134 3 V44" stroke="#79a5ea" stroke-width="2"/><path d="M48 1 L53 6.5 L62 1 H133 M51 6 V44" fill="none" stroke="#001e7c" stroke-width="2"/></svg>
<div class="t" style="left:2422px;top:155px;width:63px;height:42px;line-height:42px;color:#1d3f94;font-size:30px;text-align:center;"><span class="k">报</span><span class="k">表</span></div>
<div style="left:2495px;top:158px;width:2px;height:38px;background:#001e7c;"></div>
<div style="left:2493px;top:152px;width:4px;height:2px;background:#001e7c;"></div>
<svg style="left:690px;top:152px" width="168" height="44" viewBox="0 0 168 44"><path d="M4 44 L47 4 Q50 1 56 1 H155 L157 3 V44 Z" fill="url(#tga)"/><path d="M8 44 L49 6 Q51 3 56 3 H155" fill="none" stroke="#fff" stroke-width="2"/><path d="M156 4 V44" stroke="#fff" stroke-width="2"/><path d="M4 44 L47 4 Q50 1 56 1 H156" fill="none" stroke="#2a5594" stroke-width="2"/><path d="M156 1 L159 5 V44" fill="none" stroke="#2a5594" stroke-width="2"/></svg>
<div style="left:696px;top:196px;width:152px;height:4px;background:#fbae65;"></div>
<div class="t" style="left:742px;top:155px;width:60px;height:42px;line-height:42px;color:#1d3f94;font-size:30px;font-weight:bold;text-align:center;"><span class="k">协</span><span class="k">议</span></div>
<svg style="left:820px;top:166px" width="16" height="14" viewBox="0 0 16 14"><path d="M1.5 1 L14.5 13 M14.5 1 L1.5 13" stroke="#24488c" stroke-width="3.5"/></svg>
<div style="left:2834px;top:150px;width:40px;height:40px;border:2px solid #9fb8dc;background:#d7e5f8;border-radius:2px;"></div>
<svg style="left:2840px;top:156px" width="30" height="28" viewBox="0 0 30 28"><rect x="1" y="5" width="26" height="20" fill="#f4f6fa" stroke="#7d8ea8" stroke-width="2"/><path d="M1 5 L4 1 H24 L27 5" fill="#dfe5ee" stroke="#7d8ea8" stroke-width="2"/><rect x="16" y="0" width="8" height="3" fill="#9ab4e0"/><rect x="4" y="13" width="8" height="8" fill="#e2a63a"/><path d="M14 11 H24 M14 15 H24 M14 19 H24" stroke="#5c6c88" stroke-width="2"/></svg>
<div style="left:372px;top:200px;width:2498px;height:58px;background:linear-gradient(180deg,#b5d9fc 0,#b5d9fc 2px,#e4effc 2px,#deeafb 4px,#d3e3fa 35%,#c3daf8 55%,#b3d0f6 85%,#a9c9f3 100%);"></div>
<div style="left:372px;top:256px;width:2498px;height:2px;background:#a9d0fc;"></div>
<div style="left:372px;top:258px;width:2498px;height:2px;background:#5f8dca;"></div>
<svg style="left:386px;top:214px" width="34" height="34" viewBox="0 0 34 34"><rect x="1" y="1" width="22" height="16" fill="#f5f7fb" stroke="#8c98b0" stroke-width="2"/><path d="M5 6 H19 M5 10 H19" stroke="#9fb3dc" stroke-width="2"/><rect x="12" y="12" width="20" height="20" fill="#5a5ab0" stroke="#3c3c88" stroke-width="1"/><rect x="16" y="13" width="12" height="8" fill="#eef0fa"/><rect x="17" y="25" width="10" height="7" fill="#2a2a58"/><rect x="21" y="27" width="3" height="4" fill="#d8dce6"/></svg>
<div style="left:428px;top:212px;width:2px;height:38px;background:#9dbcea;"></div>
<div style="left:430px;top:212px;width:2px;height:38px;background:#edf4fd;"></div>
<div style="left:436px;top:208px;width:44px;height:44px;background:linear-gradient(180deg,#fbb469 0,#f9a04e 45%,#f99a45 100%);border:1px solid #f3953d;"></div>
<svg style="left:441px;top:210px" width="36" height="38" viewBox="0 0 36 38"><rect x="9" y="12" width="24" height="23" fill="#fff" stroke="#5a6c92" stroke-width="2"/><rect x="9" y="12" width="24" height="6" fill="#3e6fc4"/><g fill="#333"><rect x="12" y="22" width="2" height="2"/><rect x="12" y="26" width="2" height="2"/><rect x="12" y="30" width="2" height="2"/><rect x="16" y="22" width="2" height="2"/><rect x="16" y="26" width="2" height="2"/><rect x="16" y="30" width="2" height="2"/><rect x="20" y="22" width="2" height="2"/><rect x="20" y="26" width="2" height="2"/><rect x="20" y="30" width="2" height="2"/><rect x="24" y="22" width="2" height="2"/><rect x="24" y="26" width="2" height="2"/><rect x="24" y="30" width="2" height="2"/><rect x="28" y="22" width="2" height="2"/><rect x="28" y="26" width="2" height="2"/><rect x="28" y="30" width="2" height="2"/></g><circle cx="15" cy="10" r="7" fill="#e6eef8" stroke="#b9c0cc" stroke-width="2.5" opacity=".95"/><path d="M9 15 L2 22" stroke="#d08a3a" stroke-width="5"/></svg>
<svg style="left:488px;top:214px" width="34" height="34" viewBox="0 0 34 34"><path d="M1 2 H29 L19 14 V27 L12 22 V14 Z" fill="#4c9ddc" stroke="#2f78b8" stroke-width="1"/><path d="M4 3 H20 L13 12 Z" fill="#9fd0f4"/><path d="M20 18 H26 V24 H32 V30 H26 V36 H20 V30 H14 V24 H20 Z" transform="translate(2,-3) scale(.9)" fill="#a9e0e4" stroke="#14494d" stroke-width="2.2"/></svg>
<svg style="left:530px;top:214px" width="34" height="34" viewBox="0 0 34 34"><rect x="2" y="1" width="8" height="6" fill="#f2f4f8" stroke="#8a8a8a" stroke-width="1.5"/><path d="M4 7 V28 H8 M4 18 H8" stroke="#2a7a3a" stroke-width="2" fill="none"/><rect x="8" y="14" width="9" height="7" fill="#f2f4f8" stroke="#8a8a8a" stroke-width="1.5"/><rect x="8" y="24" width="9" height="7" fill="#f2f4f8" stroke="#8a8a8a" stroke-width="1.5"/><path d="M20 12 V30 L24 26 L27 33 L30 31 L27 25 H33 Z" fill="#d8dce4" stroke="#8a92a0" stroke-width="1.5"/></svg>
<div style="left:572px;top:212px;width:2px;height:38px;background:#9dbcea;"></div>
<div style="left:574px;top:212px;width:2px;height:38px;background:#edf4fd;"></div>
<svg style="left:589px;top:215px" width="26" height="30" viewBox="0 0 26 30"><path d="M21 11 A8.5 8.5 0 0 0 5 10" fill="none" stroke="#3a88cc" stroke-width="5"/><path d="M25 3 L24 15 L14 11 Z" fill="#3a88cc"/><path d="M4 19 A8.5 8.5 0 0 0 20 20" fill="none" stroke="#2f74b8" stroke-width="5"/><path d="M0 27 L1 15 L11 19 Z" fill="#2f74b8"/></svg>
<svg style="left:630px;top:228px" width="12" height="8" viewBox="0 0 12 8"><path d="M0 0 H11 L5.5 6 Z" fill="#111"/></svg>
<div style="left:652px;top:212px;width:2px;height:38px;background:#9dbcea;"></div>
<div style="left:654px;top:212px;width:2px;height:38px;background:#edf4fd;"></div>
<div class="t" style="left:664px;top:210px;width:70px;height:44px;line-height:44px;font-size:30px;"><span class="k">过</span><span class="k">滤</span>:</div>
<div style="left:738px;top:204px;width:670px;height:52px;background:#fff;border:2px solid #a3bbdc;border-left-color:#b9cde9;border-right-color:#b9cde9;"></div>
<div style="left:1378px;top:208px;width:26px;height:44px;background:linear-gradient(180deg,#dde9fb,#b9d2f6);"></div>
<svg style="left:1385px;top:227px" width="12" height="8" viewBox="0 0 12 8"><path d="M0 0 H11 L5.5 6 Z" fill="#111"/></svg>
<div style="left:1410px;top:204px;width:448px;height:52px;background:#fff;border:2px solid #a3bbdc;border-left-color:#b9cde9;border-right-color:#b9cde9;"></div>
<div style="left:1828px;top:208px;width:26px;height:44px;background:linear-gradient(180deg,#dde9fb,#b9d2f6);"></div>
<svg style="left:1835px;top:227px" width="12" height="8" viewBox="0 0 12 8"><path d="M0 0 H11 L5.5 6 Z" fill="#111"/></svg>
<div class="t" style="left:1416px;top:206px;width:100px;height:52px;line-height:52px;font-size:30px;"><span class="k">全</span><span class="k">部</span></div>
<div style="left:1867px;top:217px;width:25px;height:25px;background:#fff;border:2px solid #7d9cd0;"></div>
<div class="t" style="left:1903px;top:208px;width:124px;height:44px;line-height:44px;font-size:30px;"><span class="k">全</span><span class="k">字</span><span class="k">匹</span><span class="k">配</span></div>
<svg style="left:2037px;top:213px" width="32" height="32" viewBox="0 0 32 32"><circle cx="12" cy="12" r="10" fill="#f4f8fc" stroke="#b0b8c4" stroke-width="2.5"/><path d="M6 10 A7 7 0 0 1 14 5" stroke="#fff" stroke-width="2" fill="none"/><path d="M19 19 L28 28" stroke="#d0a050" stroke-width="5" stroke-linecap="round"/></svg>
<div style="left:2531px;top:212px;width:2px;height:38px;background:#9dbcea;"></div>
<div style="left:2533px;top:212px;width:2px;height:38px;background:#edf4fd;"></div>
<div style="left:2540px;top:204px;width:327px;height:52px;background:#bbd7fb;border:2px solid #2f4f96;"></div>
<div style="left:2785px;top:207px;width:79px;height:46px;background:#fff;border-left:2px solid #6f8fc8;"></div>
<div class="t" style="left:2562px;top:208px;width:220px;height:44px;line-height:44px;font-weight:bold;font-size:30px;letter-spacing:0.5px;"><span class="k">实</span><span class="k">时</span><span class="k">分</span><span class="k">析</span>\<span class="k">协</span><span class="k">议</span>:</div>
<div class="t" style="left:2785px;top:208px;width:79px;height:46px;line-height:46px;text-align:center;">26</div>
<div style="left:372px;top:260px;width:2456px;height:50px;background:#d2e1f1;"></div>
<div style="left:372px;top:310px;width:2456px;height:2px;background:#a9b6c4;"></div>
<div style="left:920px;top:260px;width:2px;height:826px;background:#b1bcc9;"></div>
<div style="left:1370px;top:260px;width:2px;height:826px;background:#b1bcc9;"></div>
<div style="left:1770px;top:260px;width:2px;height:826px;background:#b1bcc9;"></div>
<div style="left:2095px;top:260px;width:2px;height:826px;background:#b1bcc9;"></div>
<div style="left:2418px;top:260px;width:2px;height:826px;background:#b1bcc9;"></div>
<div style="left:2718px;top:260px;width:2px;height:826px;background:#b1bcc9;"></div>
<div class="t" style="left:384px;top:264px;width:80px;height:48px;line-height:48px;font-size:30px;"><span class="k">名</span><span class="k">字</span></div>
<div class="t" style="left:926px;top:264px;width:400px;height:48px;line-height:48px;text-align:right;font-size:30px;"><span class="k">字</span><span class="k">节</span><span class="k">数</span></div>
<svg style="left:1342px;top:283px" width="12" height="8" viewBox="0 0 12 8"><path d="M0 0 H11 L5.5 6 Z" fill="#111"/></svg>
<div class="t" style="left:1358px;top:264px;width:400px;height:48px;line-height:48px;text-align:right;font-size:30px;"><span class="k">数</span><span class="k">据</span><span class="k">包</span></div>
<div class="t" style="left:1683px;top:264px;width:400px;height:48px;line-height:48px;text-align:right;font-size:30px;"><span class="k">每</span><span class="k">秒</span><span class="k">位</span></div>
<div class="t" style="left:2006px;top:264px;width:400px;height:48px;line-height:48px;text-align:right;font-size:30px;"><span class="k">每</span><span class="k">秒</span><span class="k">数</span><span class="k">据</span><span class="k">包</span></div>
<div class="t" style="left:2306px;top:264px;width:400px;height:48px;line-height:48px;text-align:right;font-size:30px;"><span class="k">字</span><span class="k">节</span>%</div>
<div style="left:372px;top:358px;width:2456px;height:2px;background:#b1bcc9;"></div>
<div style="left:372px;top:406px;width:2456px;height:2px;background:#b1bcc9;"></div>
<div style="left:372px;top:454px;width:2456px;height:2px;background:#b1bcc9;"></div>
<div style="left:372px;top:502px;width:2456px;height:2px;background:#b1bcc9;"></div>
<div style="left:372px;top:550px;width:2456px;height:2px;background:#b1bcc9;"></div>
<div style="left:372px;top:598px;width:2456px;height:2px;background:#b1bcc9;"></div>
<div style="left:372px;top:646px;width:2456px;height:2px;background:#b1bcc9;"></div>
<div style="left:372px;top:694px;width:2456px;height:2px;background:#b1bcc9;"></div>
<div style="left:372px;top:742px;width:2456px;height:2px;background:#b1bcc9;"></div>
<div style="left:372px;top:790px;width:2456px;height:2px;background:#b1bcc9;"></div>
<div style="left:372px;top:838px;width:2456px;height:2px;background:#b1bcc9;"></div>
<div style="left:372px;top:886px;width:2456px;height:2px;background:#b1bcc9;"></div>
<div style="left:372px;top:886px;width:2456px;height:50px;background:#d4effc;border-top:2px solid #5d9bdc;border-bottom:2px solid #5d9bdc;"></div>
<div style="left:920px;top:888px;width:2px;height:46px;background:#5d9bdc;"></div>
<div style="left:1370px;top:888px;width:2px;height:46px;background:#5d9bdc;"></div>
<div style="left:1770px;top:888px;width:2px;height:46px;background:#5d9bdc;"></div>
<div style="left:2095px;top:888px;width:2px;height:46px;background:#5d9bdc;"></div>
<div style="left:2418px;top:888px;width:2px;height:46px;background:#5d9bdc;"></div>
<div style="left:2718px;top:888px;width:2px;height:46px;background:#5d9bdc;"></div>
<div style="left:372px;top:982px;width:2456px;height:2px;background:#b1bcc9;"></div>
<div style="left:372px;top:1030px;width:2456px;height:2px;background:#b1bcc9;"></div>
<div style="left:372px;top:1078px;width:2456px;height:2px;background:#b1bcc9;"></div>
<div style="left:426px;top:344px;width:2px;height:742px;background:repeating-linear-gradient(180deg,#8c8472 0 2px,transparent 2px 4px);"></div>
<div style="left:462px;top:392px;width:2px;height:694px;background:repeating-linear-gradient(180deg,#8c8472 0 2px,transparent 2px 4px);"></div>
<div style="left:498px;top:440px;width:2px;height:135px;background:repeating-linear-gradient(180deg,#8c8472 0 2px,transparent 2px 4px);"></div>
<div style="left:534px;top:488px;width:2px;height:39px;background:repeating-linear-gradient(180deg,#8c8472 0 2px,transparent 2px 4px);"></div>
<div style="left:534px;top:584px;width:2px;height:135px;background:repeating-linear-gradient(180deg,#8c8472 0 2px,transparent 2px 4px);"></div>
<div style="left:570px;top:632px;width:2px;height:39px;background:repeating-linear-gradient(180deg,#8c8472 0 2px,transparent 2px 4px);"></div>
<div style="left:570px;top:728px;width:2px;height:39px;background:repeating-linear-gradient(180deg,#8c8472 0 2px,transparent 2px 4px);"></div>
<div style="left:498px;top:824px;width:2px;height:262px;background:repeating-linear-gradient(180deg,#8c8472 0 2px,transparent 2px 4px);"></div>
<div style="left:534px;top:872px;width:2px;height:87px;background:repeating-linear-gradient(180deg,#8c8472 0 2px,transparent 2px 4px);"></div>
<svg style="left:382px;top:326px" width="18" height="18" viewBox="0 0 18 18"><rect x="1" y="1" width="16" height="16" fill="#fff" stroke="#6e6e6e" stroke-width="2"/><rect x="2" y="10" width="14" height="6" fill="#c4c4c4"/><rect x="4" y="8" width="10" height="2" fill="#000"/></svg>
<div style="left:402px;top:334px;width:14px;height:2px;background:repeating-linear-gradient(90deg,#8c8472 0 2px,transparent 2px 4px);"></div>
<svg style="left:418px;top:324px" width="34" height="28" viewBox="0 0 34 28"><g><rect x="4" y="2" width="28" height="6" fill="#c9c9c9" opacity=".6"/><rect x="14" y="8" width="6" height="18" fill="#c9c9c9" opacity=".6"/><rect x="0" y="0" width="30" height="6" fill="#8a8a8a"/><rect x="9" y="1" width="12" height="4" fill="#e4e4e4"/><rect x="0" y="0" width="9" height="6" fill="#2f9e3b"/><rect x="1" y="1" width="7" height="3" fill="#5fcf69"/><rect x="21" y="0" width="9" height="6" fill="#2f9e3b"/><rect x="22" y="1" width="7" height="3" fill="#5fcf69"/><rect x="12" y="6" width="6" height="4" fill="#7a7a7a"/><rect x="12" y="10" width="6" height="14" fill="#2f9e3b"/><rect x="14" y="11" width="2" height="12" fill="#7fe088"/></g></svg>
<div class="t" style="left:459px;top:314px;width:300px;height:46px;line-height:46px;color:#14902c;">Ethernet II</div>
<div style="left:928px;top:316px;width:436px;height:38px;background:#108a2c;"></div>
<div class="t" style="left:959px;top:314px;width:400px;height:46px;line-height:46px;text-align:right;color:#14902c;">1.32 MB</div>
<div style="left:928px;top:316px;width:436px;height:38px;overflow:hidden;"><div class="t" style="left:31px;top:-2px;width:400px;height:46px;line-height:46px;text-align:right;color:#fff;">1.32 MB</div></div>
<div class="t" style="left:1359px;top:314px;width:400px;height:46px;line-height:46px;text-align:right;color:#14902c;">2,228</div>
<div class="t" style="left:1683px;top:314px;width:400px;height:46px;line-height:46px;text-align:right;color:#14902c;">1.120 Kbps</div>
<div class="t" style="left:2007px;top:314px;width:400px;height:46px;line-height:46px;text-align:right;color:#14902c;">2</div>
<div class="t" style="left:2307px;top:314px;width:400px;height:46px;line-height:46px;text-align:right;color:#14902c;">100.000%</div>
<svg style="left:418px;top:374px" width="18" height="18" viewBox="0 0 18 18"><rect x="1" y="1" width="16" height="16" fill="#fff" stroke="#6e6e6e" stroke-width="2"/><rect x="2" y="10" width="14" height="6" fill="#c4c4c4"/><rect x="4" y="8" width="10" height="2" fill="#000"/></svg>
<div style="left:438px;top:382px;width:14px;height:2px;background:repeating-linear-gradient(90deg,#8c8472 0 2px,transparent 2px 4px);"></div>
<svg style="left:454px;top:372px" width="34" height="28" viewBox="0 0 34 28"><g><rect x="4" y="2" width="28" height="6" fill="#c9c9c9" opacity=".6"/><rect x="14" y="8" width="6" height="18" fill="#c9c9c9" opacity=".6"/><rect x="0" y="0" width="30" height="6" fill="#8a8a8a"/><rect x="9" y="1" width="12" height="4" fill="#e4e4e4"/><rect x="0" y="0" width="9" height="6" fill="#2f9e3b"/><rect x="1" y="1" width="7" height="3" fill="#5fcf69"/><rect x="21" y="0" width="9" height="6" fill="#2f9e3b"/><rect x="22" y="1" width="7" height="3" fill="#5fcf69"/><rect x="12" y="6" width="6" height="4" fill="#7a7a7a"/><rect x="12" y="10" width="6" height="14" fill="#2f9e3b"/><rect x="14" y="11" width="2" height="12" fill="#7fe088"/></g></svg>
<div class="t" style="left:495px;top:362px;width:300px;height:46px;line-height:46px;color:#1a5c8c;">IP</div>
<div style="left:928px;top:364px;width:434px;height:38px;background:#1a5c8c;"></div>
<div class="t" style="left:959px;top:362px;width:400px;height:46px;line-height:46px;text-align:right;color:#1a5c8c;">1.32 MB</div>
<div style="left:928px;top:364px;width:434px;height:38px;overflow:hidden;"><div class="t" style="left:31px;top:-2px;width:400px;height:46px;line-height:46px;text-align:right;color:#fff;">1.32 MB</div></div>
<div class="t" style="left:1359px;top:362px;width:400px;height:46px;line-height:46px;text-align:right;color:#1a5c8c;">2,204</div>
<div class="t" style="left:1683px;top:362px;width:400px;height:46px;line-height:46px;text-align:right;color:#1a5c8c;">1.120 Kbps</div>
<div class="t" style="left:2007px;top:362px;width:400px;height:46px;line-height:46px;text-align:right;color:#1a5c8c;">2</div>
<div class="t" style="left:2307px;top:362px;width:400px;height:46px;line-height:46px;text-align:right;color:#1a5c8c;">99.774%</div>
<svg style="left:454px;top:422px" width="18" height="18" viewBox="0 0 18 18"><rect x="1" y="1" width="16" height="16" fill="#fff" stroke="#6e6e6e" stroke-width="2"/><rect x="2" y="10" width="14" height="6" fill="#c4c4c4"/><rect x="4" y="8" width="10" height="2" fill="#000"/></svg>
<div style="left:474px;top:430px;width:14px;height:2px;background:repeating-linear-gradient(90deg,#8c8472 0 2px,transparent 2px 4px);"></div>
<svg style="left:490px;top:420px" width="34" height="28" viewBox="0 0 34 28"><g><rect x="4" y="2" width="28" height="6" fill="#c9c9c9" opacity=".6"/><rect x="14" y="8" width="6" height="18" fill="#c9c9c9" opacity=".6"/><rect x="0" y="0" width="30" height="6" fill="#8a8a8a"/><rect x="9" y="1" width="12" height="4" fill="#e4e4e4"/><rect x="0" y="0" width="9" height="6" fill="#2f9e3b"/><rect x="1" y="1" width="7" height="3" fill="#5fcf69"/><rect x="21" y="0" width="9" height="6" fill="#2f9e3b"/><rect x="22" y="1" width="7" height="3" fill="#5fcf69"/><rect x="12" y="6" width="6" height="4" fill="#7a7a7a"/><rect x="12" y="10" width="6" height="14" fill="#2f9e3b"/><rect x="14" y="11" width="2" height="12" fill="#7fe088"/></g></svg>
<div class="t" style="left:531px;top:410px;width:300px;height:46px;line-height:46px;color:#2092c2;transform:scaleX(0.9);transform-origin:0 50%;">TCP</div>
<div style="left:928px;top:412px;width:428px;height:38px;background:#2092c2;"></div>
<div class="t" style="left:959px;top:410px;width:400px;height:46px;line-height:46px;text-align:right;color:#2092c2;">1.30 MB</div>
<div style="left:928px;top:412px;width:428px;height:38px;overflow:hidden;"><div class="t" style="left:31px;top:-2px;width:400px;height:46px;line-height:46px;text-align:right;color:#fff;">1.30 MB</div></div>
<div class="t" style="left:1359px;top:410px;width:400px;height:46px;line-height:46px;text-align:right;color:#2092c2;">2,057</div>
<div class="t" style="left:1683px;top:410px;width:400px;height:46px;line-height:46px;text-align:right;color:#2092c2;">1.120 Kbps</div>
<div class="t" style="left:2007px;top:410px;width:400px;height:46px;line-height:46px;text-align:right;color:#2092c2;">2</div>
<div class="t" style="left:2307px;top:410px;width:400px;height:46px;line-height:46px;text-align:right;color:#2092c2;">98.579%</div>
<svg style="left:490px;top:470px" width="18" height="18" viewBox="0 0 18 18"><rect x="1" y="1" width="16" height="16" fill="#fff" stroke="#6e6e6e" stroke-width="2"/><rect x="2" y="10" width="14" height="6" fill="#c4c4c4"/><rect x="4" y="8" width="10" height="2" fill="#000"/></svg>
<div style="left:510px;top:478px;width:14px;height:2px;background:repeating-linear-gradient(90deg,#8c8472 0 2px,transparent 2px 4px);"></div>
<svg style="left:526px;top:468px" width="34" height="28" viewBox="0 0 34 28"><g><rect x="4" y="2" width="28" height="6" fill="#c9c9c9" opacity=".6"/><rect x="14" y="8" width="6" height="18" fill="#c9c9c9" opacity=".6"/><rect x="0" y="0" width="30" height="6" fill="#8a8a8a"/><rect x="9" y="1" width="12" height="4" fill="#e4e4e4"/><rect x="0" y="0" width="9" height="6" fill="#2f9e3b"/><rect x="1" y="1" width="7" height="3" fill="#5fcf69"/><rect x="21" y="0" width="9" height="6" fill="#2f9e3b"/><rect x="22" y="1" width="7" height="3" fill="#5fcf69"/><rect x="12" y="6" width="6" height="4" fill="#7a7a7a"/><rect x="12" y="10" width="6" height="14" fill="#2f9e3b"/><rect x="14" y="11" width="2" height="12" fill="#7fe088"/></g></svg>
<div class="t" style="left:567px;top:458px;width:300px;height:46px;line-height:46px;color:#fb8b45;transform:scaleX(0.9);transform-origin:0 50%;">SSL</div>
<div style="left:928px;top:460px;width:412px;height:38px;background:#fb8b45;"></div>
<div class="t" style="left:959px;top:458px;width:400px;height:46px;line-height:46px;text-align:right;color:#fb8b45;">1.25 MB</div>
<div style="left:928px;top:460px;width:412px;height:38px;overflow:hidden;"><div class="t" style="left:31px;top:-2px;width:400px;height:46px;line-height:46px;text-align:right;color:#fff;">1.25 MB</div></div>
<div class="t" style="left:1359px;top:458px;width:400px;height:46px;line-height:46px;text-align:right;color:#fb8b45;">1,218</div>
<div class="t" style="left:1683px;top:458px;width:400px;height:46px;line-height:46px;text-align:right;color:#fb8b45;">1.354 Mbps</div>
<div class="t" style="left:2007px;top:458px;width:400px;height:46px;line-height:46px;text-align:right;color:#fb8b45;">169</div>
<div class="t" style="left:2307px;top:458px;width:400px;height:46px;line-height:46px;text-align:right;color:#fb8b45;">94.679%</div>
<div style="left:536px;top:526px;width:24px;height:2px;background:repeating-linear-gradient(90deg,#8c8472 0 2px,transparent 2px 4px);"></div>
<svg style="left:562px;top:516px" width="34" height="28" viewBox="0 0 34 28"><g><rect x="4" y="2" width="28" height="6" fill="#c9c9c9" opacity=".6"/><rect x="14" y="8" width="6" height="18" fill="#c9c9c9" opacity=".6"/><rect x="0" y="0" width="30" height="6" fill="#8a8a8a"/><rect x="9" y="1" width="12" height="4" fill="#e4e4e4"/><rect x="0" y="0" width="9" height="6" fill="#2f9e3b"/><rect x="1" y="1" width="7" height="3" fill="#5fcf69"/><rect x="21" y="0" width="9" height="6" fill="#2f9e3b"/><rect x="22" y="1" width="7" height="3" fill="#5fcf69"/><rect x="12" y="6" width="6" height="4" fill="#7a7a7a"/><rect x="12" y="10" width="6" height="14" fill="#2f9e3b"/><rect x="14" y="11" width="2" height="12" fill="#7fe088"/></g></svg>
<div class="t" style="left:603px;top:506px;width:300px;height:46px;line-height:46px;color:#2638e6;transform:scaleX(0.9);transform-origin:0 50%;">HTTPS</div>
<div style="left:928px;top:508px;width:412px;height:38px;background:#2640f0;"></div>
<div class="t" style="left:959px;top:506px;width:400px;height:46px;line-height:46px;text-align:right;color:#2638e6;">1.25 MB</div>
<div style="left:928px;top:508px;width:412px;height:38px;overflow:hidden;"><div class="t" style="left:31px;top:-2px;width:400px;height:46px;line-height:46px;text-align:right;color:#fff;">1.25 MB</div></div>
<div class="t" style="left:1359px;top:506px;width:400px;height:46px;line-height:46px;text-align:right;color:#2638e6;">1,218</div>
<div class="t" style="left:1683px;top:506px;width:400px;height:46px;line-height:46px;text-align:right;color:#2638e6;">1.354 Mbps</div>
<div class="t" style="left:2007px;top:506px;width:400px;height:46px;line-height:46px;text-align:right;color:#2638e6;">169</div>
<div class="t" style="left:2307px;top:506px;width:400px;height:46px;line-height:46px;text-align:right;color:#2638e6;">94.679%</div>
<svg style="left:490px;top:566px" width="18" height="18" viewBox="0 0 18 18"><rect x="1" y="1" width="16" height="16" fill="#fff" stroke="#6e6e6e" stroke-width="2"/><rect x="2" y="10" width="14" height="6" fill="#c4c4c4"/><rect x="4" y="8" width="10" height="2" fill="#000"/></svg>
<div style="left:510px;top:574px;width:14px;height:2px;background:repeating-linear-gradient(90deg,#8c8472 0 2px,transparent 2px 4px);"></div>
<svg style="left:526px;top:564px" width="34" height="28" viewBox="0 0 34 28"><g><rect x="4" y="2" width="28" height="6" fill="#c9c9c9" opacity=".6"/><rect x="14" y="8" width="6" height="18" fill="#c9c9c9" opacity=".6"/><rect x="0" y="0" width="30" height="6" fill="#8a8a8a"/><rect x="9" y="1" width="12" height="4" fill="#e4e4e4"/><rect x="0" y="0" width="9" height="6" fill="#2f9e3b"/><rect x="1" y="1" width="7" height="3" fill="#5fcf69"/><rect x="21" y="0" width="9" height="6" fill="#2f9e3b"/><rect x="22" y="1" width="7" height="3" fill="#5fcf69"/><rect x="12" y="6" width="6" height="4" fill="#7a7a7a"/><rect x="12" y="10" width="6" height="14" fill="#2f9e3b"/><rect x="14" y="11" width="2" height="12" fill="#7fe088"/></g></svg>
<div class="t" style="left:567px;top:554px;width:300px;height:46px;line-height:46px;color:#e12fc9;transform:scaleX(0.9);transform-origin:0 50%;">HTTP</div>
<div style="left:928px;top:556px;width:2px;height:38px;background:#e12fc9;"></div>
<div class="t" style="left:959px;top:554px;width:400px;height:46px;line-height:46px;text-align:right;color:#e12fc9;">2.64 KB</div>
<div class="t" style="left:1359px;top:554px;width:400px;height:46px;line-height:46px;text-align:right;color:#e12fc9;">6</div>
<div class="t" style="left:1683px;top:554px;width:400px;height:46px;line-height:46px;text-align:right;color:#e12fc9;">10.368 Kbps</div>
<div class="t" style="left:2007px;top:554px;width:400px;height:46px;line-height:46px;text-align:right;color:#e12fc9;">3</div>
<div class="t" style="left:2307px;top:554px;width:400px;height:46px;line-height:46px;text-align:right;color:#e12fc9;">0.195%</div>
<svg style="left:526px;top:614px" width="18" height="18" viewBox="0 0 18 18"><rect x="1" y="1" width="16" height="16" fill="#fff" stroke="#6e6e6e" stroke-width="2"/><rect x="2" y="10" width="14" height="6" fill="#c4c4c4"/><rect x="4" y="8" width="10" height="2" fill="#000"/></svg>
<div style="left:546px;top:622px;width:14px;height:2px;background:repeating-linear-gradient(90deg,#8c8472 0 2px,transparent 2px 4px);"></div>
<svg style="left:562px;top:612px" width="34" height="28" viewBox="0 0 34 28"><g><rect x="4" y="2" width="28" height="6" fill="#c9c9c9" opacity=".6"/><rect x="14" y="8" width="6" height="18" fill="#c9c9c9" opacity=".6"/><rect x="0" y="0" width="30" height="6" fill="#8a8a8a"/><rect x="9" y="1" width="12" height="4" fill="#e4e4e4"/><rect x="0" y="0" width="9" height="6" fill="#2f9e3b"/><rect x="1" y="1" width="7" height="3" fill="#5fcf69"/><rect x="21" y="0" width="9" height="6" fill="#2f9e3b"/><rect x="22" y="1" width="7" height="3" fill="#5fcf69"/><rect x="12" y="6" width="6" height="4" fill="#7a7a7a"/><rect x="12" y="10" width="6" height="14" fill="#2f9e3b"/><rect x="14" y="11" width="2" height="12" fill="#7fe088"/></g></svg>
<div class="t" style="left:603px;top:602px;width:300px;height:46px;line-height:46px;color:#c2601f;transform:scaleX(0.9);transform-origin:0 50%;">RESPONSE</div>
<div style="left:928px;top:604px;width:2px;height:38px;background:#c2601f;"></div>
<div class="t" style="left:959px;top:602px;width:400px;height:46px;line-height:46px;text-align:right;color:#c2601f;">1.59 KB</div>
<div class="t" style="left:1359px;top:602px;width:400px;height:46px;line-height:46px;text-align:right;color:#c2601f;">4</div>
<div class="t" style="left:1683px;top:602px;width:400px;height:46px;line-height:46px;text-align:right;color:#c2601f;">6.512 Kbps</div>
<div class="t" style="left:2007px;top:602px;width:400px;height:46px;line-height:46px;text-align:right;color:#c2601f;">2</div>
<div class="t" style="left:2307px;top:602px;width:400px;height:46px;line-height:46px;text-align:right;color:#c2601f;">0.117%</div>
<div style="left:572px;top:670px;width:24px;height:2px;background:repeating-linear-gradient(90deg,#8c8472 0 2px,transparent 2px 4px);"></div>
<svg style="left:598px;top:660px" width="34" height="28" viewBox="0 0 34 28"><g><rect x="4" y="2" width="28" height="6" fill="#c9c9c9" opacity=".6"/><rect x="14" y="8" width="6" height="18" fill="#c9c9c9" opacity=".6"/><rect x="0" y="0" width="30" height="6" fill="#8a8a8a"/><rect x="9" y="1" width="12" height="4" fill="#e4e4e4"/><rect x="0" y="0" width="9" height="6" fill="#2f9e3b"/><rect x="1" y="1" width="7" height="3" fill="#5fcf69"/><rect x="21" y="0" width="9" height="6" fill="#2f9e3b"/><rect x="22" y="1" width="7" height="3" fill="#5fcf69"/><rect x="12" y="6" width="6" height="4" fill="#7a7a7a"/><rect x="12" y="10" width="6" height="14" fill="#2f9e3b"/><rect x="14" y="11" width="2" height="12" fill="#7fe088"/></g></svg>
<div class="t" style="left:639px;top:650px;width:300px;height:46px;line-height:46px;color:#c2601f;transform:scaleX(0.9);transform-origin:0 50%;">TEXT</div>
<div style="left:928px;top:652px;width:2px;height:38px;background:#c2601f;"></div>
<div class="t" style="left:959px;top:650px;width:400px;height:46px;line-height:46px;text-align:right;color:#c2601f;">1.59 KB</div>
<div class="t" style="left:1359px;top:650px;width:400px;height:46px;line-height:46px;text-align:right;color:#c2601f;">4</div>
<div class="t" style="left:1683px;top:650px;width:400px;height:46px;line-height:46px;text-align:right;color:#c2601f;">6.512 Kbps</div>
<div class="t" style="left:2007px;top:650px;width:400px;height:46px;line-height:46px;text-align:right;color:#c2601f;">2</div>
<div class="t" style="left:2307px;top:650px;width:400px;height:46px;line-height:46px;text-align:right;color:#c2601f;">0.117%</div>
<svg style="left:526px;top:710px" width="18" height="18" viewBox="0 0 18 18"><rect x="1" y="1" width="16" height="16" fill="#fff" stroke="#6e6e6e" stroke-width="2"/><rect x="2" y="10" width="14" height="6" fill="#c4c4c4"/><rect x="4" y="8" width="10" height="2" fill="#000"/></svg>
<div style="left:546px;top:718px;width:14px;height:2px;background:repeating-linear-gradient(90deg,#8c8472 0 2px,transparent 2px 4px);"></div>
<svg style="left:562px;top:708px" width="34" height="28" viewBox="0 0 34 28"><g><rect x="4" y="2" width="28" height="6" fill="#c9c9c9" opacity=".6"/><rect x="14" y="8" width="6" height="18" fill="#c9c9c9" opacity=".6"/><rect x="0" y="0" width="30" height="6" fill="#8a8a8a"/><rect x="9" y="1" width="12" height="4" fill="#e4e4e4"/><rect x="0" y="0" width="9" height="6" fill="#2f9e3b"/><rect x="1" y="1" width="7" height="3" fill="#5fcf69"/><rect x="21" y="0" width="9" height="6" fill="#2f9e3b"/><rect x="22" y="1" width="7" height="3" fill="#5fcf69"/><rect x="12" y="6" width="6" height="4" fill="#7a7a7a"/><rect x="12" y="10" width="6" height="14" fill="#2f9e3b"/><rect x="14" y="11" width="2" height="12" fill="#7fe088"/></g></svg>
<div class="t" style="left:603px;top:698px;width:300px;height:46px;line-height:46px;color:#0b5f22;transform:scaleX(0.9);transform-origin:0 50%;">REQUEST</div>
<div style="left:928px;top:700px;width:2px;height:38px;background:#0b5f22;"></div>
<div class="t" style="left:959px;top:698px;width:400px;height:46px;line-height:46px;text-align:right;color:#0b5f22;">1.06 KB</div>
<div class="t" style="left:1359px;top:698px;width:400px;height:46px;line-height:46px;text-align:right;color:#0b5f22;">2</div>
<div class="t" style="left:1683px;top:698px;width:400px;height:46px;line-height:46px;text-align:right;color:#0b5f22;">3.856 Kbps</div>
<div class="t" style="left:2007px;top:698px;width:400px;height:46px;line-height:46px;text-align:right;color:#0b5f22;">1</div>
<div class="t" style="left:2307px;top:698px;width:400px;height:46px;line-height:46px;text-align:right;color:#0b5f22;">0.078%</div>
<div style="left:572px;top:766px;width:24px;height:2px;background:repeating-linear-gradient(90deg,#8c8472 0 2px,transparent 2px 4px);"></div>
<svg style="left:598px;top:756px" width="34" height="28" viewBox="0 0 34 28"><g><rect x="4" y="2" width="28" height="6" fill="#c9c9c9" opacity=".6"/><rect x="14" y="8" width="6" height="18" fill="#c9c9c9" opacity=".6"/><rect x="0" y="0" width="30" height="6" fill="#8a8a8a"/><rect x="9" y="1" width="12" height="4" fill="#e4e4e4"/><rect x="0" y="0" width="9" height="6" fill="#2f9e3b"/><rect x="1" y="1" width="7" height="3" fill="#5fcf69"/><rect x="21" y="0" width="9" height="6" fill="#2f9e3b"/><rect x="22" y="1" width="7" height="3" fill="#5fcf69"/><rect x="12" y="6" width="6" height="4" fill="#7a7a7a"/><rect x="12" y="10" width="6" height="14" fill="#2f9e3b"/><rect x="14" y="11" width="2" height="12" fill="#7fe088"/></g></svg>
<div class="t" style="left:639px;top:746px;width:300px;height:46px;line-height:46px;color:#0b5f22;transform:scaleX(0.9);transform-origin:0 50%;">GET</div>
<div style="left:928px;top:748px;width:2px;height:38px;background:#0b5f22;"></div>
<div class="t" style="left:959px;top:746px;width:400px;height:46px;line-height:46px;text-align:right;color:#0b5f22;">1.06 KB</div>
<div class="t" style="left:1359px;top:746px;width:400px;height:46px;line-height:46px;text-align:right;color:#0b5f22;">2</div>
<div class="t" style="left:1683px;top:746px;width:400px;height:46px;line-height:46px;text-align:right;color:#0b5f22;">3.856 Kbps</div>
<div class="t" style="left:2007px;top:746px;width:400px;height:46px;line-height:46px;text-align:right;color:#0b5f22;">1</div>
<div class="t" style="left:2307px;top:746px;width:400px;height:46px;line-height:46px;text-align:right;color:#0b5f22;">0.078%</div>
<svg style="left:454px;top:806px" width="18" height="18" viewBox="0 0 18 18"><rect x="1" y="1" width="16" height="16" fill="#fff" stroke="#6e6e6e" stroke-width="2"/><rect x="2" y="10" width="14" height="6" fill="#c4c4c4"/><rect x="4" y="8" width="10" height="2" fill="#000"/></svg>
<div style="left:474px;top:814px;width:14px;height:2px;background:repeating-linear-gradient(90deg,#8c8472 0 2px,transparent 2px 4px);"></div>
<svg style="left:490px;top:804px" width="34" height="28" viewBox="0 0 34 28"><g><rect x="4" y="2" width="28" height="6" fill="#c9c9c9" opacity=".6"/><rect x="14" y="8" width="6" height="18" fill="#c9c9c9" opacity=".6"/><rect x="0" y="0" width="30" height="6" fill="#8a8a8a"/><rect x="9" y="1" width="12" height="4" fill="#e4e4e4"/><rect x="0" y="0" width="9" height="6" fill="#2f9e3b"/><rect x="1" y="1" width="7" height="3" fill="#5fcf69"/><rect x="21" y="0" width="9" height="6" fill="#2f9e3b"/><rect x="22" y="1" width="7" height="3" fill="#5fcf69"/><rect x="12" y="6" width="6" height="4" fill="#7a7a7a"/><rect x="12" y="10" width="6" height="14" fill="#2f9e3b"/><rect x="14" y="11" width="2" height="12" fill="#7fe088"/></g></svg>
<div class="t" style="left:531px;top:794px;width:300px;height:46px;line-height:46px;color:#c8581c;transform:scaleX(0.9);transform-origin:0 50%;">UDP</div>
<div style="left:928px;top:796px;width:5px;height:38px;background:#c8581c;"></div>
<div class="t" style="left:959px;top:794px;width:400px;height:46px;line-height:46px;text-align:right;color:#c8581c;">16.08 KB</div>
<div class="t" style="left:1359px;top:794px;width:400px;height:46px;line-height:46px;text-align:right;color:#c8581c;">145</div>
<div class="t" style="left:1683px;top:794px;width:400px;height:46px;line-height:46px;text-align:right;color:#c8581c;">11.264 Kbps</div>
<div class="t" style="left:2007px;top:794px;width:400px;height:46px;line-height:46px;text-align:right;color:#c8581c;">12</div>
<div class="t" style="left:2307px;top:794px;width:400px;height:46px;line-height:46px;text-align:right;color:#c8581c;">1.186%</div>
<svg style="left:490px;top:854px" width="18" height="18" viewBox="0 0 18 18"><rect x="1" y="1" width="16" height="16" fill="#fff" stroke="#6e6e6e" stroke-width="2"/><rect x="2" y="10" width="14" height="6" fill="#c4c4c4"/><rect x="4" y="8" width="10" height="2" fill="#000"/></svg>
<div style="left:510px;top:862px;width:14px;height:2px;background:repeating-linear-gradient(90deg,#8c8472 0 2px,transparent 2px 4px);"></div>
<svg style="left:526px;top:852px" width="34" height="28" viewBox="0 0 34 28"><g><rect x="4" y="2" width="28" height="6" fill="#c9c9c9" opacity=".6"/><rect x="14" y="8" width="6" height="18" fill="#c9c9c9" opacity=".6"/><rect x="0" y="0" width="30" height="6" fill="#8a8a8a"/><rect x="9" y="1" width="12" height="4" fill="#e4e4e4"/><rect x="0" y="0" width="9" height="6" fill="#2f9e3b"/><rect x="1" y="1" width="7" height="3" fill="#5fcf69"/><rect x="21" y="0" width="9" height="6" fill="#2f9e3b"/><rect x="22" y="1" width="7" height="3" fill="#5fcf69"/><rect x="12" y="6" width="6" height="4" fill="#7a7a7a"/><rect x="12" y="10" width="6" height="14" fill="#2f9e3b"/><rect x="14" y="11" width="2" height="12" fill="#7fe088"/></g></svg>
<div class="t" style="left:567px;top:842px;width:300px;height:46px;line-height:46px;color:#9b5757;transform:scaleX(0.9);transform-origin:0 50%;">DNS</div>
<div style="left:928px;top:844px;width:2px;height:38px;background:#9b5757;"></div>
<div class="t" style="left:959px;top:842px;width:400px;height:46px;line-height:46px;text-align:right;color:#9b5757;">11.31 KB</div>
<div class="t" style="left:1359px;top:842px;width:400px;height:46px;line-height:46px;text-align:right;color:#9b5757;">98</div>
<div class="t" style="left:1683px;top:842px;width:400px;height:46px;line-height:46px;text-align:right;color:#9b5757;">6.656 Kbps</div>
<div class="t" style="left:2007px;top:842px;width:400px;height:46px;line-height:46px;text-align:right;color:#9b5757;">6</div>
<div class="t" style="left:2307px;top:842px;width:400px;height:46px;line-height:46px;text-align:right;color:#9b5757;">0.835%</div>
<div style="left:536px;top:910px;width:24px;height:2px;background:repeating-linear-gradient(90deg,#8c8472 0 2px,transparent 2px 4px);"></div>
<svg style="left:562px;top:900px" width="34" height="28" viewBox="0 0 34 28"><g><rect x="4" y="2" width="28" height="6" fill="#c9c9c9" opacity=".6"/><rect x="14" y="8" width="6" height="18" fill="#c9c9c9" opacity=".6"/><rect x="0" y="0" width="30" height="6" fill="#8a8a8a"/><rect x="9" y="1" width="12" height="4" fill="#e4e4e4"/><rect x="0" y="0" width="9" height="6" fill="#2f9e3b"/><rect x="1" y="1" width="7" height="3" fill="#5fcf69"/><rect x="21" y="0" width="9" height="6" fill="#2f9e3b"/><rect x="22" y="1" width="7" height="3" fill="#5fcf69"/><rect x="12" y="6" width="6" height="4" fill="#7a7a7a"/><rect x="12" y="10" width="6" height="14" fill="#2f9e3b"/><rect x="14" y="11" width="2" height="12" fill="#7fe088"/></g></svg>
<div class="t" style="left:603px;top:890px;width:300px;height:46px;line-height:46px;color:#2a62c4;">DNS Response</div>
<div style="left:928px;top:892px;width:2px;height:38px;background:#2a62c4;"></div>
<div class="t" style="left:959px;top:890px;width:400px;height:46px;line-height:46px;text-align:right;color:#2a62c4;">6.69 KB</div>
<div class="t" style="left:1359px;top:890px;width:400px;height:46px;line-height:46px;text-align:right;color:#2a62c4;">40</div>
<div class="t" style="left:1683px;top:890px;width:400px;height:46px;line-height:46px;text-align:right;color:#2a62c4;">4.864 Kbps</div>
<div class="t" style="left:2007px;top:890px;width:400px;height:46px;line-height:46px;text-align:right;color:#2a62c4;">3</div>
<div class="t" style="left:2307px;top:890px;width:400px;height:46px;line-height:46px;text-align:right;color:#2a62c4;">0.494%</div>
<div style="left:536px;top:958px;width:24px;height:2px;background:repeating-linear-gradient(90deg,#8c8472 0 2px,transparent 2px 4px);"></div>
<svg style="left:562px;top:948px" width="34" height="28" viewBox="0 0 34 28"><g><rect x="4" y="2" width="28" height="6" fill="#c9c9c9" opacity=".6"/><rect x="14" y="8" width="6" height="18" fill="#c9c9c9" opacity=".6"/><rect x="0" y="0" width="30" height="6" fill="#8a8a8a"/><rect x="9" y="1" width="12" height="4" fill="#e4e4e4"/><rect x="0" y="0" width="9" height="6" fill="#2f9e3b"/><rect x="1" y="1" width="7" height="3" fill="#5fcf69"/><rect x="21" y="0" width="9" height="6" fill="#2f9e3b"/><rect x="22" y="1" width="7" height="3" fill="#5fcf69"/><rect x="12" y="6" width="6" height="4" fill="#7a7a7a"/><rect x="12" y="10" width="6" height="14" fill="#2f9e3b"/><rect x="14" y="11" width="2" height="12" fill="#7fe088"/></g></svg>
<div class="t" style="left:603px;top:938px;width:300px;height:46px;line-height:46px;color:#0b5a20;">DNS Query</div>
<div style="left:928px;top:940px;width:2px;height:38px;background:#0b5a20;"></div>
<div class="t" style="left:959px;top:938px;width:400px;height:46px;line-height:46px;text-align:right;color:#0b5a20;">4.62 KB</div>
<div class="t" style="left:1359px;top:938px;width:400px;height:46px;line-height:46px;text-align:right;color:#0b5a20;">58</div>
<div class="t" style="left:1683px;top:938px;width:400px;height:46px;line-height:46px;text-align:right;color:#0b5a20;">1.792 Kbps</div>
<div class="t" style="left:2007px;top:938px;width:400px;height:46px;line-height:46px;text-align:right;color:#0b5a20;">3</div>
<div class="t" style="left:2307px;top:938px;width:400px;height:46px;line-height:46px;text-align:right;color:#0b5a20;">0.341%</div>
<div style="left:500px;top:1006px;width:24px;height:2px;background:repeating-linear-gradient(90deg,#8c8472 0 2px,transparent 2px 4px);"></div>
<svg style="left:526px;top:996px" width="34" height="28" viewBox="0 0 34 28"><g><rect x="4" y="2" width="28" height="6" fill="#c9c9c9" opacity=".6"/><rect x="14" y="8" width="6" height="18" fill="#c9c9c9" opacity=".6"/><rect x="0" y="0" width="30" height="6" fill="#8a8a8a"/><rect x="9" y="1" width="12" height="4" fill="#e4e4e4"/><rect x="0" y="0" width="9" height="6" fill="#2f9e3b"/><rect x="1" y="1" width="7" height="3" fill="#5fcf69"/><rect x="21" y="0" width="9" height="6" fill="#2f9e3b"/><rect x="22" y="1" width="7" height="3" fill="#5fcf69"/><rect x="12" y="6" width="6" height="4" fill="#7a7a7a"/><rect x="12" y="10" width="6" height="14" fill="#2f9e3b"/><rect x="14" y="11" width="2" height="12" fill="#7fe088"/></g></svg>
<div class="t" style="left:567px;top:986px;width:300px;height:46px;line-height:46px;color:#fb8b45;transform:scaleX(0.9);transform-origin:0 50%;">NBNS</div>
<div style="left:928px;top:988px;width:2px;height:38px;background:#fb8b45;"></div>
<div class="t" style="left:959px;top:986px;width:400px;height:46px;line-height:46px;text-align:right;color:#fb8b45;">2.53 KB</div>
<div class="t" style="left:1359px;top:986px;width:400px;height:46px;line-height:46px;text-align:right;color:#fb8b45;">27</div>
<div class="t" style="left:1683px;top:986px;width:400px;height:46px;line-height:46px;text-align:right;color:#fb8b45;">4.608 Kbps</div>
<div class="t" style="left:2007px;top:986px;width:400px;height:46px;line-height:46px;text-align:right;color:#fb8b45;">6</div>
<div class="t" style="left:2307px;top:986px;width:400px;height:46px;line-height:46px;text-align:right;color:#fb8b45;">0.187%</div>
<div style="left:500px;top:1054px;width:24px;height:2px;background:repeating-linear-gradient(90deg,#8c8472 0 2px,transparent 2px 4px);"></div>
<svg style="left:526px;top:1044px" width="34" height="28" viewBox="0 0 34 28"><g><rect x="4" y="2" width="28" height="6" fill="#c9c9c9" opacity=".6"/><rect x="14" y="8" width="6" height="18" fill="#c9c9c9" opacity=".6"/><rect x="0" y="0" width="30" height="6" fill="#8a8a8a"/><rect x="9" y="1" width="12" height="4" fill="#e4e4e4"/><rect x="0" y="0" width="9" height="6" fill="#2f9e3b"/><rect x="1" y="1" width="7" height="3" fill="#5fcf69"/><rect x="21" y="0" width="9" height="6" fill="#2f9e3b"/><rect x="22" y="1" width="7" height="3" fill="#5fcf69"/><rect x="12" y="6" width="6" height="4" fill="#7a7a7a"/><rect x="12" y="10" width="6" height="14" fill="#2f9e3b"/><rect x="14" y="11" width="2" height="12" fill="#7fe088"/></g></svg>
<div class="t" style="left:567px;top:1034px;width:300px;height:46px;line-height:46px;color:#975252;transform:scaleX(0.9);transform-origin:0 50%;">SSDP</div>
<div style="left:928px;top:1036px;width:2px;height:38px;background:#975252;"></div>
<div class="t" style="left:959px;top:1034px;width:400px;height:46px;line-height:46px;text-align:right;color:#975252;">880.00 B</div>
<div class="t" style="left:1359px;top:1034px;width:400px;height:46px;line-height:46px;text-align:right;color:#975252;">4</div>
<div class="t" style="left:1683px;top:1034px;width:400px;height:46px;line-height:46px;text-align:right;color:#975252;">1.760 Kbps</div>
<div class="t" style="left:2007px;top:1034px;width:400px;height:46px;line-height:46px;text-align:right;color:#975252;">1</div>
<div class="t" style="left:2307px;top:1034px;width:400px;height:46px;line-height:46px;text-align:right;color:#975252;">0.063%</div>
<div style="left:928px;top:1082px;width:2px;height:4px;background:#c02020;"></div>
<div style="left:2828px;top:260px;width:42px;height:826px;background:linear-gradient(90deg,#f4f4f4,#ececec);"></div>
<svg style="left:2841px;top:278px" width="16" height="10" viewBox="0 0 16 10"><path d="M0 9 H16 L8 0 Z" fill="#444"/></svg>
<svg style="left:2842px;top:1061px" width="14" height="8" viewBox="0 0 14 8"><path d="M0 0 H14 L7 7 Z" fill="#444"/></svg>
<div style="left:2831px;top:305px;width:36px;height:451px;background:linear-gradient(90deg,#f0f0f0 0,#dddddd 30%,#d0d0d2 70%,#bcbcc0 100%);border:2px solid #a2a2a6;border-radius:3px;"></div>
<div style="left:2841px;top:520px;width:16px;height:3px;background:#555;"></div>
<div style="left:2841px;top:528px;width:16px;height:3px;background:#555;"></div>
<div style="left:2841px;top:536px;width:16px;height:3px;background:#555;"></div>
<div style="left:372px;top:1086px;width:2456px;height:42px;background:linear-gradient(180deg,#f2f2f2,#e8e8e8);"></div>
<div style="left:2828px;top:1086px;width:42px;height:42px;background:#eee;"></div>
<svg style="left:386px;top:1100px" width="10" height="16" viewBox="0 0 10 16"><path d="M10 0 V15 L1 7.5 Z" fill="#333"/></svg>
<svg style="left:2802px;top:1100px" width="10" height="16" viewBox="0 0 10 16"><path d="M0 0 V15 L9 7.5 Z" fill="#333"/></svg>
<div style="left:416px;top:1089px;width:1591px;height:36px;background:linear-gradient(180deg,#ececec 0,#d6d6d6 30%,#ccccce 70%,#b6b6ba 100%);border:2px solid #a0a0a4;border-radius:3px;"></div>
<div style="left:1200px;top:1099px;width:3px;height:16px;background:#555;"></div>
<div style="left:1208px;top:1099px;width:3px;height:16px;background:#555;"></div>
<div style="left:1216px;top:1099px;width:3px;height:16px;background:#555;"></div>
<div style="left:372px;top:1128px;width:2498px;height:2px;background:#5a5a5a;"></div>
<div style="left:372px;top:1130px;width:2498px;height:6px;background:#e6e6e6;"></div>
<div style="left:372px;top:1136px;width:2498px;height:2px;background:#5a5a5a;"></div>
<div style="left:372px;top:1138px;width:2498px;height:52px;background:#bbd7fb;"></div>
<div style="left:372px;top:1188px;width:2498px;height:456px;background:#2a5594;"></div>
<div style="left:374px;top:1190px;width:2494px;height:452px;background:#fdb060;"></div>
<div style="left:376px;top:1192px;width:2490px;height:448px;background:#fff;"></div>
<svg style="left:380px;top:1145px" width="196" height="43" viewBox="0 0 196 43"><path d="M4 43 L47 4 Q50 1 56 1 H183 L185 3 V43 Z" fill="url(#tga)"/><path d="M8 43 L49 6 Q51 3 56 3 H183" fill="none" stroke="#fff" stroke-width="2"/><path d="M184 4 V43" stroke="#fff" stroke-width="2"/><path d="M4 43 L47 4 Q50 1 56 1 H184" fill="none" stroke="#2a5594" stroke-width="2"/><path d="M184 1 L187 5 V43" fill="none" stroke="#2a5594" stroke-width="2"/></svg>
<div style="left:388px;top:1188px;width:178px;height:4px;background:#fbae65;"></div>
<svg style="left:516px;top:1145px" width="171" height="43" viewBox="0 0 171 43"><path d="M52 43 V8 L54 6 L62 1 H158 L160 3 V43 Z" fill="url(#tg)"/><path d="M54 9 L63 3 H158" fill="none" stroke="#fff" stroke-width="2"/><path d="M160 3 V43" stroke="#79a5ea" stroke-width="2"/><path d="M48 1 L53 6.5 L62 1 H159 M51 6 V43" fill="none" stroke="#001e7c" stroke-width="2"/></svg>
<svg style="left:627px;top:1145px" width="144" height="43" viewBox="0 0 144 43"><path d="M52 43 V8 L54 6 L62 1 H131 L133 3 V43 Z" fill="url(#tg)"/><path d="M54 9 L63 3 H131" fill="none" stroke="#fff" stroke-width="2"/><path d="M133 3 V43" stroke="#79a5ea" stroke-width="2"/><path d="M48 1 L53 6.5 L62 1 H132 M51 6 V43" fill="none" stroke="#001e7c" stroke-width="2"/></svg>
<div style="left:761px;top:1151px;width:2px;height:37px;background:#001e7c;"></div>
<div style="left:759px;top:1145px;width:4px;height:2px;background:#001e7c;"></div>
<div class="t" style="left:434px;top:1148px;width:120px;height:42px;line-height:42px;color:#1d3f94;font-size:30px;font-weight:bold;text-align:center;"><span class="k">物</span><span class="k">理</span><span class="k">端</span><span class="k">点</span></div>
<div class="t" style="left:577px;top:1148px;width:86px;height:42px;line-height:42px;color:#1d3f94;font-size:30px;text-align:center;">IP<span class="k">端</span><span class="k">点</span></div>
<div class="t" style="left:689px;top:1148px;width:60px;height:42px;line-height:42px;color:#1d3f94;font-size:30px;text-align:center;"><span class="k">日</span><span class="k">志</span></div>
<svg style="left:2822px;top:1152px" width="12" height="18" viewBox="0 0 12 18"><path d="M9 1 V17 L1 9 Z" fill="none" stroke="#1d3f94" stroke-width="2"/></svg>
<svg style="left:2850px;top:1152px" width="12" height="18" viewBox="0 0 12 18"><path d="M1 1 V17 L9 9 Z" fill="none" stroke="#1d3f94" stroke-width="2"/></svg>
<div style="left:376px;top:1192px;width:2490px;height:58px;background:linear-gradient(180deg,#b5d9fc 0,#b5d9fc 2px,#e4effc 2px,#deeafb 4px,#d3e3fa 35%,#c3daf8 55%,#b3d0f6 85%,#a9c9f3 100%);"></div>
<div style="left:376px;top:1248px;width:2490px;height:2px;background:#a9d0fc;"></div>
<div style="left:376px;top:1250px;width:2490px;height:2px;background:#5f8dca;"></div>
<div style="left:384px;top:1200px;width:44px;height:44px;background:linear-gradient(180deg,#fbb469 0,#f9a04e 45%,#f99a45 100%);border:1px solid #f3953d;"></div>
<svg style="left:390px;top:1204px" width="34" height="36" viewBox="0 0 34 36"><rect x="4" y="2" width="13" height="24" fill="#e4e8ee" stroke="#6a7894" stroke-width="1.5"/><g fill="#2a8a3a"><rect x="7" y="6" width="2" height="2"/><rect x="7" y="10" width="2" height="2"/><rect x="7" y="14" width="2" height="2"/><rect x="7" y="18" width="2" height="2"/></g><path d="M10 7 H15 M10 11 H15 M10 15 H15 M10 19 H15" stroke="#555" stroke-width="1.5"/><rect x="18" y="14" width="13" height="19" fill="#fff" stroke="#6a7894" stroke-width="1.5"/><rect x="20" y="17" width="3" height="13" fill="#e03020"/><path d="M24 19 H29 M24 23 H29 M24 27 H29" stroke="#333" stroke-width="2"/><path d="M20 10 L25 2 L30 10 Z" fill="#4f86d4" stroke="#2f5fa8" stroke-width="1"/><rect x="23" y="9" width="4" height="4" fill="#4f86d4"/><path d="M4 27 L9 35 L14 27 Z" fill="#4f86d4" stroke="#2f5fa8" stroke-width="1"/><rect x="7" y="24" width="4" height="4" fill="#4f86d4"/></svg>
<div style="left:434px;top:1204px;width:2px;height:38px;background:#9dbcea;"></div>
<div style="left:436px;top:1204px;width:2px;height:38px;background:#edf4fd;"></div>
<svg style="left:446px;top:1206px" width="34" height="34" viewBox="0 0 34 34"><rect x="1" y="1" width="22" height="16" fill="#f5f7fb" stroke="#8c98b0" stroke-width="2"/><path d="M5 6 H19 M5 10 H19" stroke="#9fb3dc" stroke-width="2"/><rect x="12" y="12" width="20" height="20" fill="#5a5ab0" stroke="#3c3c88" stroke-width="1"/><rect x="16" y="13" width="12" height="8" fill="#eef0fa"/><rect x="17" y="25" width="10" height="7" fill="#2a2a58"/><rect x="21" y="27" width="3" height="4" fill="#d8dce6"/></svg>
<div style="left:488px;top:1204px;width:2px;height:38px;background:#9dbcea;"></div>
<div style="left:490px;top:1204px;width:2px;height:38px;background:#edf4fd;"></div>
<svg style="left:503px;top:1206px" width="34" height="34" viewBox="0 0 34 34"><path d="M1 2 H29 L19 14 V27 L12 22 V14 Z" fill="#4c9ddc" stroke="#2f78b8" stroke-width="1"/><path d="M4 3 H20 L13 12 Z" fill="#9fd0f4"/><path d="M20 18 H26 V24 H32 V30 H26 V36 H20 V30 H14 V24 H20 Z" transform="translate(2,-3) scale(.9)" fill="#a9e0e4" stroke="#14494d" stroke-width="2.2"/></svg>
<svg style="left:545px;top:1206px" width="36" height="36" viewBox="0 0 36 36"><rect x="1" y="1" width="30" height="22" fill="#f4f6fa" stroke="#5a6c92" stroke-width="2"/><rect x="1" y="1" width="30" height="6" fill="#4c7cc8"/><path d="M11 7 V23 M21 7 V23 M1 13 H31 M1 18 H31" stroke="#9fb0cc" stroke-width="1.5"/><path d="M21.5 17 H26.5 V21.5 H31 V26.5 H26.5 V31 H21.5 V26.5 H17 V21.5 H21.5 Z" fill="#a9e0e4" stroke="#14494d" stroke-width="2"/></svg>
<svg style="left:590px;top:1206px" width="34" height="34" viewBox="0 0 34 34"><rect x="2" y="1" width="8" height="6" fill="#f2f4f8" stroke="#8a8a8a" stroke-width="1.5"/><path d="M4 7 V28 H8 M4 18 H8" stroke="#2a7a3a" stroke-width="2" fill="none"/><rect x="8" y="14" width="9" height="7" fill="#f2f4f8" stroke="#8a8a8a" stroke-width="1.5"/><rect x="8" y="24" width="9" height="7" fill="#f2f4f8" stroke="#8a8a8a" stroke-width="1.5"/><path d="M20 12 V30 L24 26 L27 33 L30 31 L27 25 H33 Z" fill="#d8dce4" stroke="#8a92a0" stroke-width="1.5"/></svg>
<div style="left:628px;top:1200px;width:44px;height:44px;background:linear-gradient(180deg,#fbb469 0,#f9a04e 45%,#f99a45 100%);border:1px solid #f3953d;"></div>
<svg style="left:634px;top:1206px" width="32" height="32" viewBox="0 0 32 32"><rect x="2" y="2" width="14" height="9" fill="#dfe8f6" stroke="#4c6ca8" stroke-width="2"/><path d="M8 11 V27 H14 M8 18 H14" stroke="#4c6ca8" stroke-width="2" fill="none"/><rect x="14" y="14" width="14" height="7" fill="#fff" stroke="#4c6ca8" stroke-width="2"/><rect x="14" y="24" width="14" height="7" fill="#fff" stroke="#4c6ca8" stroke-width="2"/></svg>
<div style="left:677px;top:1204px;width:2px;height:38px;background:#9dbcea;"></div>
<div style="left:679px;top:1204px;width:2px;height:38px;background:#edf4fd;"></div>
<svg style="left:692px;top:1207px" width="26" height="30" viewBox="0 0 26 30"><path d="M21 11 A8.5 8.5 0 0 0 5 10" fill="none" stroke="#3a88cc" stroke-width="5"/><path d="M25 3 L24 15 L14 11 Z" fill="#3a88cc"/><path d="M4 19 A8.5 8.5 0 0 0 20 20" fill="none" stroke="#2f74b8" stroke-width="5"/><path d="M0 27 L1 15 L11 19 Z" fill="#2f74b8"/></svg>
<svg style="left:733px;top:1220px" width="12" height="8" viewBox="0 0 12 8"><path d="M0 0 H11 L5.5 6 Z" fill="#111"/></svg>
<div style="left:756px;top:1204px;width:2px;height:38px;background:#9dbcea;"></div>
<div style="left:758px;top:1204px;width:2px;height:38px;background:#edf4fd;"></div>
<div class="t" style="left:768px;top:1202px;width:70px;height:44px;line-height:44px;font-size:30px;"><span class="k">过</span><span class="k">滤</span>:</div>
<div style="left:842px;top:1196px;width:670px;height:52px;background:#fff;border:2px solid #a3bbdc;border-left-color:#b9cde9;border-right-color:#b9cde9;"></div>
<div style="left:1482px;top:1200px;width:26px;height:44px;background:linear-gradient(180deg,#dde9fb,#b9d2f6);"></div>
<svg style="left:1489px;top:1219px" width="12" height="8" viewBox="0 0 12 8"><path d="M0 0 H11 L5.5 6 Z" fill="#111"/></svg>
<div style="left:1514px;top:1196px;width:450px;height:52px;background:#fff;border:2px solid #a3bbdc;border-left-color:#b9cde9;border-right-color:#b9cde9;"></div>
<div style="left:1934px;top:1200px;width:26px;height:44px;background:linear-gradient(180deg,#dde9fb,#b9d2f6);"></div>
<svg style="left:1941px;top:1219px" width="12" height="8" viewBox="0 0 12 8"><path d="M0 0 H11 L5.5 6 Z" fill="#111"/></svg>
<div class="t" style="left:1520px;top:1198px;width:100px;height:52px;line-height:52px;font-size:30px;"><span class="k">全</span><span class="k">部</span></div>
<div style="left:1971px;top:1209px;width:25px;height:25px;background:#fff;border:2px solid #7d9cd0;"></div>
<div class="t" style="left:2008px;top:1200px;width:124px;height:44px;line-height:44px;font-size:30px;"><span class="k">全</span><span class="k">字</span><span class="k">匹</span><span class="k">配</span></div>
<svg style="left:2142px;top:1205px" width="32" height="32" viewBox="0 0 32 32"><circle cx="12" cy="12" r="10" fill="#f4f8fc" stroke="#b0b8c4" stroke-width="2.5"/><path d="M6 10 A7 7 0 0 1 14 5" stroke="#fff" stroke-width="2" fill="none"/><path d="M19 19 L28 28" stroke="#d0a050" stroke-width="5" stroke-linecap="round"/></svg>
<div style="left:2379px;top:1204px;width:2px;height:38px;background:#9dbcea;"></div>
<div style="left:2381px;top:1204px;width:2px;height:38px;background:#edf4fd;"></div>
<div style="left:2389px;top:1196px;width:474px;height:52px;background:#bbd7fb;border:2px solid #2f4f96;"></div>
<div style="left:2797px;top:1199px;width:63px;height:46px;background:#fff;border-left:2px solid #6f8fc8;"></div>
<div class="t" style="left:2410px;top:1200px;width:380px;height:44px;line-height:44px;font-weight:bold;font-size:30px;letter-spacing:0.2px;">DNS_Response\<span class="k">物</span><span class="k">理</span><span class="k">端</span><span class="k">点</span>:</div>
<div class="t" style="left:2797px;top:1200px;width:63px;height:46px;line-height:46px;text-align:center;">2</div>
<div style="left:376px;top:1252px;width:2490px;height:50px;background:#d2e1f1;"></div>
<div style="left:376px;top:1302px;width:2490px;height:2px;background:#a9b6c4;"></div>
<div style="left:924px;top:1252px;width:2px;height:148px;background:#b1bcc9;"></div>
<div style="left:1298px;top:1252px;width:2px;height:148px;background:#b1bcc9;"></div>
<div style="left:1548px;top:1252px;width:2px;height:148px;background:#b1bcc9;"></div>
<div style="left:1798px;top:1252px;width:2px;height:148px;background:#b1bcc9;"></div>
<div style="left:2048px;top:1252px;width:2px;height:148px;background:#b1bcc9;"></div>
<div style="left:2498px;top:1252px;width:2px;height:148px;background:#b1bcc9;"></div>
<div class="t" style="left:388px;top:1256px;width:80px;height:48px;line-height:48px;font-size:30px;"><span class="k">名</span><span class="k">字</span></div>
<div class="t" style="left:938px;top:1256px;width:130px;height:48px;line-height:48px;font-size:30px;"><span class="k">地</span><span class="k">理</span><span class="k">位</span><span class="k">置</span></div>
<div class="t" style="left:1137px;top:1256px;width:400px;height:48px;line-height:48px;text-align:right;font-size:30px;">IP<span class="k">会</span><span class="k">话</span></div>
<div class="t" style="left:1387px;top:1256px;width:400px;height:48px;line-height:48px;text-align:right;font-size:30px;">TCP<span class="k">会</span><span class="k">话</span></div>
<div class="t" style="left:1637px;top:1256px;width:400px;height:48px;line-height:48px;text-align:right;font-size:30px;">UDP<span class="k">会</span><span class="k">话</span></div>
<div class="t" style="left:2052px;top:1256px;width:400px;height:48px;line-height:48px;text-align:right;font-size:30px;"><span class="k">字</span><span class="k">节</span><span class="k">数</span></div>
<svg style="left:2470px;top:1275px" width="12" height="8" viewBox="0 0 12 8"><path d="M0 0 H11 L5.5 6 Z" fill="#111"/></svg>
<div style="left:2700px;top:1256px;width:166px;height:48px;overflow:hidden;"><div class="t" style="left:96px;top:0;line-height:48px;font-size:30px;"><span class="k">数</span><span class="k">据</span><span class="k">包</span></div></div>
<div style="left:376px;top:1302px;width:2490px;height:50px;background:#d4effc;border-top:2px solid #5d9bdc;border-bottom:2px solid #5d9bdc;"></div>
<div style="left:924px;top:1304px;width:2px;height:46px;background:#5d9bdc;"></div>
<div style="left:1298px;top:1304px;width:2px;height:46px;background:#5d9bdc;"></div>
<div style="left:1548px;top:1304px;width:2px;height:46px;background:#5d9bdc;"></div>
<div style="left:1798px;top:1304px;width:2px;height:46px;background:#5d9bdc;"></div>
<div style="left:2048px;top:1304px;width:2px;height:46px;background:#5d9bdc;"></div>
<div style="left:2498px;top:1304px;width:2px;height:46px;background:#5d9bdc;"></div>
<div style="left:376px;top:1398px;width:2490px;height:2px;background:#b1bcc9;"></div>
<svg style="left:388px;top:1313px" width="32" height="30" viewBox="0 0 32 30"><rect x="3" y="3" width="28" height="20" fill="#c8c8c8" opacity=".6"/><rect x="1" y="1" width="26" height="18" fill="#2f9a3c" stroke="#1d6a28" stroke-width="2"/><rect x="4" y="4" width="4" height="4" fill="#e8f4e8"/><rect x="10" y="4" width="4" height="4" fill="#e8f4e8"/><rect x="4" y="10" width="4" height="4" fill="#e8f4e8"/><rect x="10" y="10" width="4" height="4" fill="#e8f4e8"/><rect x="17" y="4" width="7" height="10" fill="#e8f4e8"/><rect x="19" y="7" width="3" height="5" fill="#2f9a3c"/><rect x="14" y="19" width="12" height="5" fill="#e2c23a" stroke="#a88a1a" stroke-width="1"/></svg>
<div class="t" style="left:428px;top:1306px;width:400px;height:46px;line-height:46px;">VMware, Inc.-35:A9:45</div>
<div class="t" style="left:1137px;top:1306px;width:400px;height:46px;line-height:46px;text-align:right;">1</div>
<div class="t" style="left:1387px;top:1306px;width:400px;height:46px;line-height:46px;text-align:right;">0</div>
<div class="t" style="left:1637px;top:1306px;width:400px;height:46px;line-height:46px;text-align:right;">40</div>
<div style="left:2056px;top:1308px;width:2px;height:38px;background:#2a62c4;"></div>
<div class="t" style="left:2087px;top:1306px;width:400px;height:46px;line-height:46px;text-align:right;color:#2a62c4;">6.69 KB</div>
<div style="left:2780px;top:1306px;width:86px;height:46px;overflow:hidden;"><div class="t" style="left:69px;top:0;line-height:46px;">40</div></div>
<svg style="left:388px;top:1361px" width="32" height="30" viewBox="0 0 32 30"><rect x="3" y="3" width="28" height="20" fill="#c8c8c8" opacity=".6"/><rect x="1" y="1" width="26" height="18" fill="#2f9a3c" stroke="#1d6a28" stroke-width="2"/><rect x="4" y="4" width="4" height="4" fill="#e8f4e8"/><rect x="10" y="4" width="4" height="4" fill="#e8f4e8"/><rect x="4" y="10" width="4" height="4" fill="#e8f4e8"/><rect x="10" y="10" width="4" height="4" fill="#e8f4e8"/><rect x="17" y="4" width="7" height="10" fill="#e8f4e8"/><rect x="19" y="7" width="3" height="5" fill="#2f9a3c"/><rect x="14" y="19" width="12" height="5" fill="#e2c23a" stroke="#a88a1a" stroke-width="1"/></svg>
<div class="t" style="left:428px;top:1354px;width:400px;height:46px;line-height:46px;">VMware, Inc.-F2:74:74</div>
<div class="t" style="left:1137px;top:1354px;width:400px;height:46px;line-height:46px;text-align:right;">1</div>
<div class="t" style="left:1387px;top:1354px;width:400px;height:46px;line-height:46px;text-align:right;">0</div>
<div class="t" style="left:1637px;top:1354px;width:400px;height:46px;line-height:46px;text-align:right;">40</div>
<div style="left:2056px;top:1356px;width:2px;height:38px;background:#2a62c4;"></div>
<div class="t" style="left:2087px;top:1354px;width:400px;height:46px;line-height:46px;text-align:right;color:#2a62c4;">6.69 KB</div>
<div style="left:2780px;top:1354px;width:86px;height:46px;overflow:hidden;"><div class="t" style="left:69px;top:0;line-height:46px;">40</div></div>
<div style="left:376px;top:1598px;width:2490px;height:42px;background:linear-gradient(180deg,#f2f2f2,#e8e8e8);"></div>
<svg style="left:390px;top:1612px" width="10" height="16" viewBox="0 0 10 16"><path d="M10 0 V15 L1 7.5 Z" fill="#333"/></svg>
<svg style="left:2840px;top:1612px" width="10" height="16" viewBox="0 0 10 16"><path d="M0 0 V15 L9 7.5 Z" fill="#333"/></svg>
<div style="left:420px;top:1601px;width:1263px;height:36px;background:linear-gradient(180deg,#ececec 0,#d6d6d6 30%,#ccccce 70%,#b6b6ba 100%);border:2px solid #a0a0a4;border-radius:3px;"></div>
<div style="left:1040px;top:1611px;width:3px;height:16px;background:#555;"></div>
<div style="left:1048px;top:1611px;width:3px;height:16px;background:#555;"></div>
<div style="left:1056px;top:1611px;width:3px;height:16px;background:#555;"></div>
<div style="left:0px;top:1656px;width:2878px;height:48px;background:linear-gradient(180deg,#eaf2fc 0,#dbe8fb 2px,#c9def9 18px,#abcdf7 18px,#b7d4f8 48px);"></div>
<div style="left:0px;top:1654px;width:2878px;height:2px;background:#4a6ea8;"></div>
<div style="left:0px;top:1704px;width:2878px;height:2px;background:#3a4252;"></div>
<div style="left:276px;top:1658px;width:2px;height:43px;background:#9aa3b0;"></div>
<div style="left:278px;top:1658px;width:2px;height:43px;background:#f4f8fd;"></div>
<div style="left:468px;top:1658px;width:2px;height:43px;background:#9aa3b0;"></div>
<div style="left:470px;top:1658px;width:2px;height:43px;background:#f4f8fd;"></div>
<div style="left:767px;top:1658px;width:2px;height:43px;background:#9aa3b0;"></div>
<div style="left:769px;top:1658px;width:2px;height:43px;background:#f4f8fd;"></div>
<div style="left:928px;top:1658px;width:2px;height:43px;background:#9aa3b0;"></div>
<div style="left:930px;top:1658px;width:2px;height:43px;background:#f4f8fd;"></div>
<div style="left:1061px;top:1658px;width:2px;height:43px;background:#9aa3b0;"></div>
<div style="left:1063px;top:1658px;width:2px;height:43px;background:#f4f8fd;"></div>
<div style="left:1270px;top:1658px;width:2px;height:43px;background:#9aa3b0;"></div>
<div style="left:1272px;top:1658px;width:2px;height:43px;background:#f4f8fd;"></div>
<div style="left:2576px;top:1658px;width:2px;height:43px;background:#9aa3b0;"></div>
<div style="left:2578px;top:1658px;width:2px;height:43px;background:#f4f8fd;"></div>
<svg style="left:14px;top:1664px" width="32" height="32" viewBox="0 0 32 32"><rect x="1" y="3" width="24" height="22" fill="#f4f6fa" stroke="#5a6c92" stroke-width="2"/><rect x="1" y="3" width="24" height="5" fill="#4c7cc8"/><path d="M5 13 L8 16 L12 11 M5 20 L8 23 L12 18" stroke="#c03028" stroke-width="2" fill="none"/><path d="M14 14 H22 M14 21 H20" stroke="#8a96ac" stroke-width="2"/><path d="M16 28 L30 14 L33 17 L19 31 L14 32 Z" fill="#e8b84a" stroke="#8a6a1a" stroke-width="1"/></svg>
<div class="t" style="left:52px;top:1658px;width:210px;height:46px;line-height:46px;font-size:30px;color:#15305e;"><span class="k">实</span><span class="k">时</span><span class="k">分</span><span class="k">析</span> - <span class="k">默</span><span class="k">认</span></div>
<svg style="left:297px;top:1670px" width="32" height="26" viewBox="0 0 32 26"><rect x="1" y="1" width="26" height="18" fill="#2f9a3c" stroke="#1d6a28" stroke-width="2"/><rect x="5" y="5" width="4" height="10" fill="#e2c23a"/><rect x="11" y="5" width="4" height="10" fill="#e2c23a"/><rect x="17" y="5" width="5" height="7" fill="#e8f4e8"/><path d="M27 6 H31 V16 H27" fill="#8a8a8a"/></svg>
<div class="t" style="left:332px;top:1658px;width:124px;height:46px;line-height:46px;font-size:30px;color:#15305e;"><span class="k">本</span><span class="k">地</span><span class="k">连</span><span class="k">接</span></div>
<svg style="left:488px;top:1664px" width="34" height="32" viewBox="0 0 34 32"><path d="M8 2 H30 V14 H8 Z" fill="#e4e8ee" stroke="#5a6478" stroke-width="2"/><path d="M5 8 H27 V20 H5 Z" fill="#eef0f4" stroke="#5a6478" stroke-width="2"/><path d="M2 14 H24 V26 H2 Z" fill="#f6f8fa" stroke="#5a6478" stroke-width="2"/><rect x="2" y="24" width="24" height="6" fill="#c8ccd4" stroke="#5a6478" stroke-width="2"/></svg>
<div class="t" style="left:526px;top:1658px;width:230px;height:46px;line-height:46px;font-size:30px;color:#15305e;"><span class="k">带</span><span class="k">宽</span> - 1000Mbps</div>
<svg style="left:786px;top:1666px" width="30" height="30" viewBox="0 0 30 30"><path d="M1 2 H29 L19 14 V27 L12 22 V14 Z" fill="#c4ccd8" stroke="#8e98a8" stroke-width="1.5"/><path d="M4 3 H20 L13 12 Z" fill="#eef2f6"/></svg>
<div class="t" style="left:822px;top:1658px;width:94px;height:46px;line-height:46px;font-size:30px;color:#15305e;"><span class="k">未</span><span class="k">启</span><span class="k">用</span></div>
<div class="t" style="left:936px;top:1659px;width:110px;height:46px;line-height:46px;font-size:30px;color:#15305e;font-size:27.5px;">00:00:25</div>
<svg style="left:1082px;top:1666px" width="30" height="30" viewBox="0 0 30 30"><path d="M1 2 H27 L18 13 V24 L11 20 V13 Z" fill="#c4ccd8" stroke="#8e98a8" stroke-width="1.5"/><path d="M8 14 L14 22 L28 4" stroke="#3aa040" stroke-width="4.5" fill="none"/></svg>
<div class="t" style="left:1116px;top:1659px;width:74px;height:46px;line-height:46px;font-size:30px;color:#15305e;font-size:27.5px;">2,228</div>
<svg style="left:1205px;top:1666px" width="30" height="30" viewBox="0 0 30 30"><path d="M1 2 H27 L18 13 V24 L11 20 V13 Z" fill="#c4ccd8" stroke="#8e98a8" stroke-width="1.5"/><circle cx="17" cy="19" r="8" fill="#fff" stroke="#d82820" stroke-width="3"/><path d="M11 25 L23 13" stroke="#d82820" stroke-width="3"/></svg>
<div class="t" style="left:1238px;top:1659px;width:20px;height:46px;line-height:46px;font-size:30px;color:#15305e;font-size:27.5px;">0</div>
<div class="t" style="left:1280px;top:1658px;width:64px;height:46px;line-height:46px;font-size:30px;color:#15305e;"><span class="k">就</span><span class="k">绪</span></div>
<svg style="left:2374px;top:1664px" width="32" height="32" viewBox="0 0 32 32"><path d="M16 2 L31 29 H1 Z" fill="#f3d236" stroke="#b8941a" stroke-width="2"/><rect x="14" y="10" width="4" height="11" fill="#222"/><rect x="14" y="23" width="4" height="4" fill="#222"/></svg>
<div class="t" style="left:2410px;top:1658px;width:154px;height:46px;line-height:46px;font-size:30px;color:#15305e;"><span class="k">警</span><span class="k">报</span><span class="k">浏</span><span class="k">览</span><span class="k">器</span></div>
<div style="left:2584px;top:1668px;width:25px;height:25px;border-radius:50%;background:radial-gradient(circle at 40% 35%,#ffd27a 0,#f7a21e 60%,#e08a10 100%);border:1px solid #c97a10;"></div>
<div class="t" style="left:2620px;top:1658px;width:20px;height:46px;line-height:46px;font-size:30px;color:#15305e;">0</div>
<div style="left:2683px;top:1668px;width:25px;height:25px;border-radius:50%;background:radial-gradient(circle at 40% 35%,#ffd27a 0,#f7a21e 60%,#e08a10 100%);border:1px solid #c97a10;"></div>
<div class="t" style="left:2720px;top:1658px;width:20px;height:46px;line-height:46px;font-size:30px;color:#15305e;">0</div>
<div style="left:2783px;top:1668px;width:25px;height:25px;border-radius:50%;background:radial-gradient(circle at 40% 35%,#ffd27a 0,#f7a21e 60%,#e08a10 100%);border:1px solid #c97a10;"></div>
<div class="t" style="left:2820px;top:1658px;width:20px;height:46px;line-height:46px;font-size:30px;color:#15305e;">0</div>
</body></html>
